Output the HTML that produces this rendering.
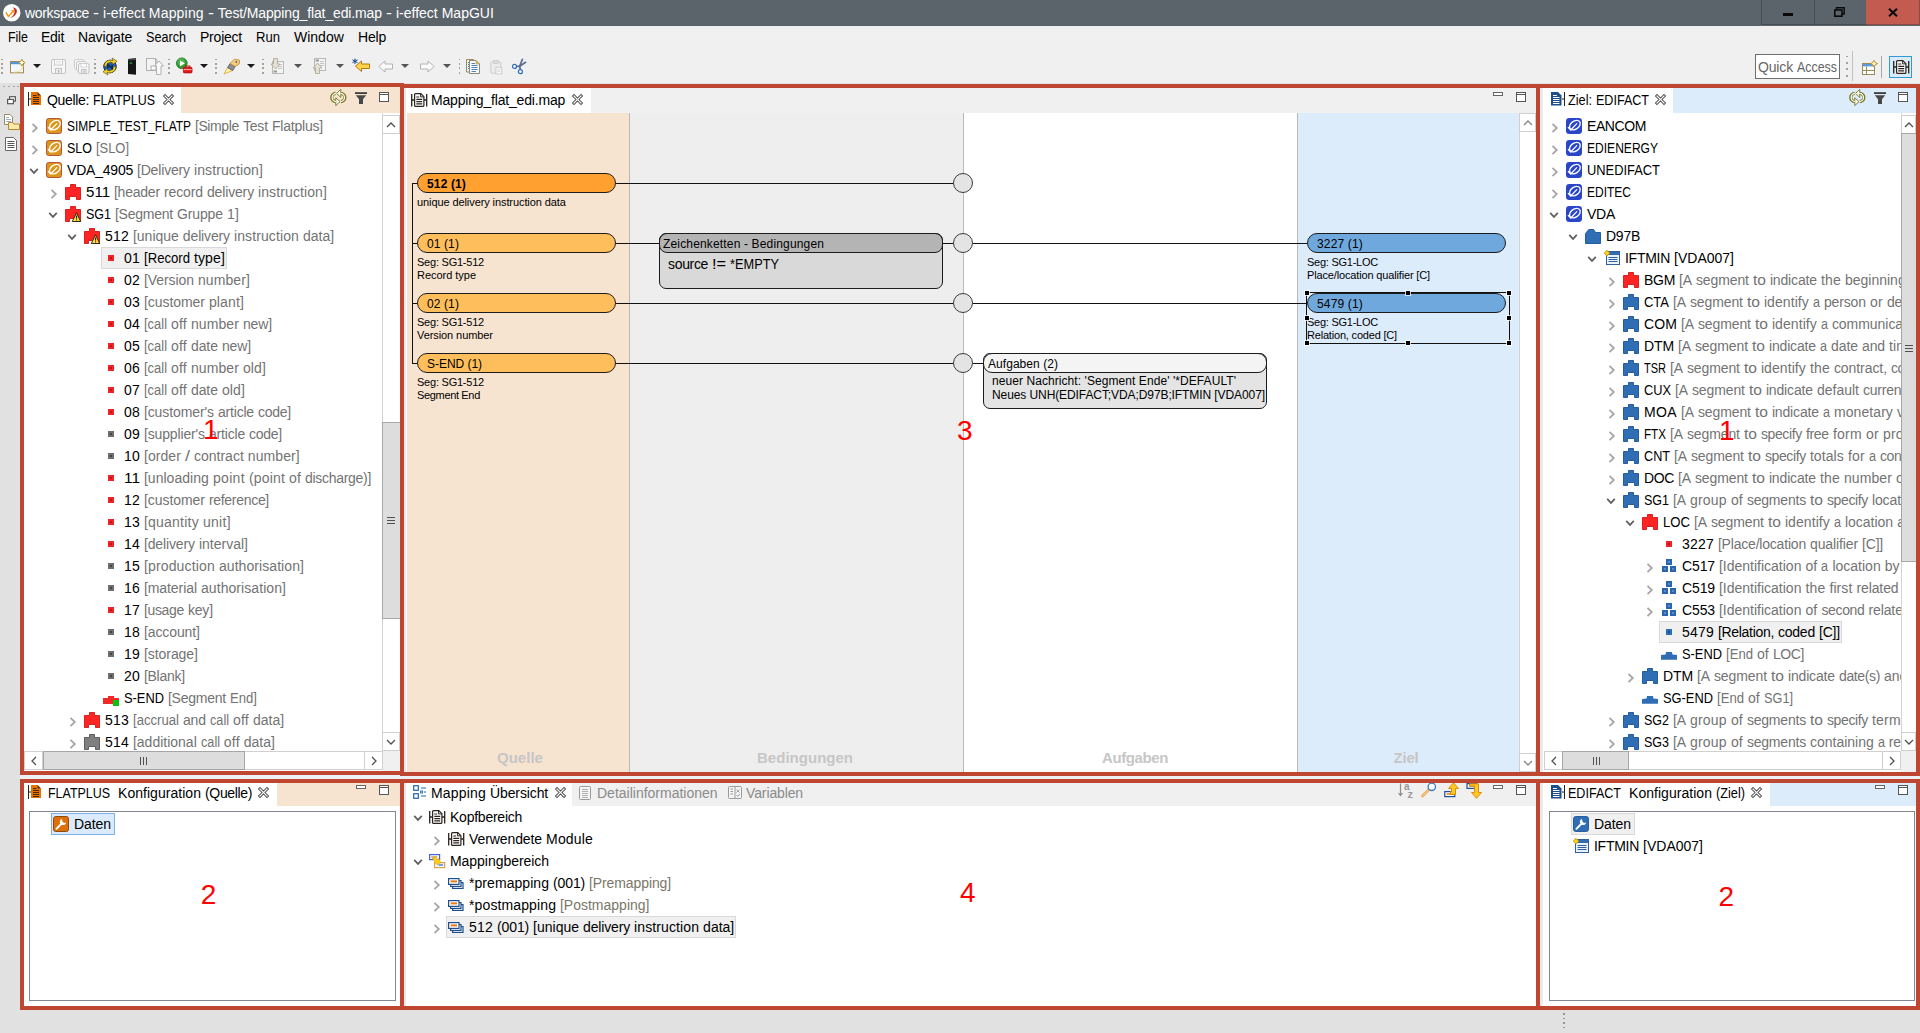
<!DOCTYPE html>
<html lang="de"><head><meta charset="utf-8"><title>i-effect MapGUI</title>
<style>
html,body{margin:0;padding:0}
body{width:1920px;height:1033px;position:relative;overflow:hidden;background:#e1e1e1;font-family:"Liberation Sans",sans-serif;font-size:14px}
div{position:absolute;box-sizing:border-box}
.t{white-space:pre}
.a{white-space:pre;font-family:"Liberation Sans",sans-serif}
svg{display:block;overflow:visible}
.sb{background:#fff;border:1px solid #c8c8c8}
</style></head><body>
<div style="left:0px;top:0px;width:1920px;height:26px;background:#5b646b;"></div>
<svg style="position:absolute;left:2.5px;top:4px" width="17.5" height="17.5" viewBox="0 0 20 20"><circle cx="10" cy="10" r="10" fill="#fff"/><path d="M11.2 3.6 C18.6 4.6 17.2 13.6 7.6 16.4 C13.4 13 14.8 8 11.2 3.6 Z" fill="#c4281c"/><path d="M3.6 10 L6.2 14.4 L11.6 8.4" fill="none" stroke="#f39a1e" stroke-width="1.7" stroke-linecap="round" stroke-linejoin="round"/><path d="M9 7.2 L12.8 6.6 L12.4 10.4 Z" fill="#f39a1e"/></svg>
<div class="t" style="left:25px;top:0px;height:26px;line-height:26px;font-size:14px;color:#fff;"><span style="letter-spacing:-0.32px">workspace</span><span style="letter-spacing:0.11px"> </span><span style="display:inline-block;width:6.00px;transform:scaleX(1.289);transform-origin:0 50%">-</span><span style="letter-spacing:0.11px"> </span>i-effect<span style="letter-spacing:0.11px"> </span><span style="letter-spacing:0.19px">Mapping</span><span style="letter-spacing:0.11px"> </span><span style="display:inline-block;width:6.00px;transform:scaleX(1.289);transform-origin:0 50%">-</span><span style="letter-spacing:0.11px"> </span><span style="letter-spacing:-0.13px">Test/Mapping_flat_edi.map</span><span style="letter-spacing:0.11px"> </span><span style="display:inline-block;width:6.00px;transform:scaleX(1.289);transform-origin:0 50%">-</span><span style="letter-spacing:0.11px"> </span>i-effect<span style="letter-spacing:0.11px"> </span>MapGUI</div>
<div style="left:1761px;top:0px;width:54px;height:25px;background:#5b646b;border:1px solid #454c52;border-top:none"></div>
<div style="left:1814px;top:0px;width:53px;height:25px;background:#5b646b;border:1px solid #454c52;border-top:none"></div>
<div style="left:1866px;top:0px;width:54px;height:25px;background:#c45b50;border:1px solid #8f4a44;border-top:none;border-left:none"></div>
<div style="left:1783px;top:13px;width:10px;height:3.4px;background:#0a0a0a;"></div>
<svg style="position:absolute;left:1834px;top:7px" width="11" height="10" viewBox="0 0 11 10"><path d="M2.5 2.5 V0.8 H10.2 V7 H8" fill="none" stroke="#0a0a0a" stroke-width="1.4"/><rect x="0.8" y="3" width="7.2" height="6.2" fill="none" stroke="#0a0a0a" stroke-width="1.6"/></svg>
<svg style="position:absolute;left:1888px;top:7.8px" width="9.4" height="8.6" viewBox="0 0 9.4 8.6"><path d="M1 0.8 L9 8.2 M9 0.8 L1 8.2" stroke="#0a0a0a" stroke-width="2.1"/></svg>
<div style="left:0px;top:26px;width:1920px;height:57px;background:#f0f0f0;"></div>
<div class="t" style="left:7.5px;top:26px;height:22px;line-height:22px;font-size:14px;color:#000;"><span style="display:inline-block;width:20.00px;transform:scaleX(0.887);transform-origin:0 50%">File</span></div>
<div class="t" style="left:41px;top:26px;height:22px;line-height:22px;font-size:14px;color:#000;"><span style="letter-spacing:-0.28px">Edit</span></div>
<div class="t" style="left:78px;top:26px;height:22px;line-height:22px;font-size:14px;color:#000;"><span style="letter-spacing:-0.15px">Navigate</span></div>
<div class="t" style="left:146px;top:26px;height:22px;line-height:22px;font-size:14px;color:#000;"><span style="display:inline-block;width:40.00px;transform:scaleX(0.902);transform-origin:0 50%">Search</span></div>
<div class="t" style="left:200px;top:26px;height:22px;line-height:22px;font-size:14px;color:#000;"><span style="letter-spacing:-0.22px">Project</span></div>
<div class="t" style="left:256px;top:26px;height:22px;line-height:22px;font-size:14px;color:#000;"><span style="display:inline-block;width:24.00px;transform:scaleX(0.935);transform-origin:0 50%">Run</span></div>
<div class="t" style="left:294px;top:26px;height:22px;line-height:22px;font-size:14px;color:#000;">Window</div>
<div class="t" style="left:358px;top:26px;height:22px;line-height:22px;font-size:14px;color:#000;"><span style="letter-spacing:-0.20px">Help</span></div>
<div style="left:1.4px;top:58.5px;width:1.7px;height:1.9px;background:#a8a090"></div><div style="left:1.4px;top:62.9px;width:1.7px;height:1.9px;background:#a8a090"></div><div style="left:1.4px;top:67.3px;width:1.7px;height:1.9px;background:#a8a090"></div><div style="left:1.4px;top:71.7px;width:1.7px;height:1.9px;background:#a8a090"></div><svg style="position:absolute;left:10px;top:57.5px" width="17" height="17" viewBox="0 0 17 17"><rect x="0.5" y="3.5" width="13" height="11.3" fill="#f2f8ff" stroke="#a88a48"/><rect x="1" y="4" width="12" height="2.2" fill="#4a96e0"/><path d="M4 14 C9 14 12.5 11.5 13 7.5" fill="none" stroke="#f6e2a8" stroke-width="1.2"/><path d="M11.8 1.2 L13 3.4 L15.2 4.6 L13 5.8 L11.8 8 L10.6 5.8 L8.4 4.6 L10.6 3.4 Z" fill="#fffbe0" stroke="#b08a2a" stroke-width="0.9"/></svg><svg style="position:absolute;left:33px;top:64px" width="8" height="4" viewBox="0 0 8 4"><path d="M0 0 H8 L4 4 Z" fill="#1a1a1a"/></svg><svg style="position:absolute;left:51px;top:59px" width="15" height="15" viewBox="0 0 15 15"><rect x="0.5" y="0.5" width="14" height="14" rx="1.5" fill="#f6f6f6" stroke="#c2c2c2"/><rect x="3.5" y="0.5" width="8" height="5.5" fill="#fcfcfc" stroke="#cacaca"/><path d="M5 2.5 H10 M5 4 H10" stroke="#dcdcdc" stroke-width="0.7"/><rect x="4.5" y="9.5" width="6" height="5" fill="#ececec" stroke="#c2c2c2"/><rect x="7" y="11" width="1.4" height="2.6" fill="#b8b8b8"/></svg><svg style="position:absolute;left:74px;top:59px" width="16" height="15" viewBox="0 0 16 15"><rect x="0.5" y="0.5" width="9.5" height="9.5" rx="1.5" fill="#f6f6f6" stroke="#cccccc"/><rect x="2.5" y="2.5" width="9.5" height="9.5" rx="1.5" fill="#f6f6f6" stroke="#c8c8c8"/><rect x="4.5" y="4.5" width="10.5" height="10" rx="1.5" fill="#f6f6f6" stroke="#c2c2c2"/><rect x="7" y="4.5" width="5.5" height="3.6" fill="#fcfcfc" stroke="#cfcfcf" stroke-width="0.8"/><rect x="7.5" y="10.5" width="4.5" height="4" fill="#ececec" stroke="#c2c2c2"/><rect x="9.3" y="11.6" width="1.2" height="2.2" fill="#b8b8b8"/></svg><div style="left:94.4px;top:58.5px;width:1.7px;height:1.9px;background:#a8a090"></div><div style="left:94.4px;top:62.9px;width:1.7px;height:1.9px;background:#a8a090"></div><div style="left:94.4px;top:67.3px;width:1.7px;height:1.9px;background:#a8a090"></div><div style="left:94.4px;top:71.7px;width:1.7px;height:1.9px;background:#a8a090"></div><svg style="position:absolute;left:101px;top:57px" width="18" height="18" viewBox="0 0 18 18"><circle cx="9" cy="9.5" r="6.3" fill="#1f5fb4" stroke="#1d2c3c" stroke-width="1"/><path d="M3 9 A6.5 6.5 0 0 1 12 3.6 L11 1 L16 4.2 L11.5 7.5 L11.4 5.4 A4.5 4.5 0 0 0 5.4 9.5 Z" fill="#f8d820" stroke="#6a5a10" stroke-width="0.7"/><path d="M15 10 A6.5 6.5 0 0 1 6 15.4 L7 18 L2 14.8 L6.5 11.5 L6.6 13.6 A4.5 4.5 0 0 0 12.6 9.5 Z" fill="#f8d820" stroke="#6a5a10" stroke-width="0.7"/><path d="M6.8 11.5 V7.5 L11.2 11.5 V7.5" fill="none" stroke="#0c2c5c" stroke-width="1.5"/></svg><svg style="position:absolute;left:127px;top:58px" width="10" height="17" viewBox="0 0 10 17"><path d="M1 1 L9 0.3 V16.7 L1 16 Z" fill="#151515"/><path d="M1 1 L9 0.3 L9 2 L1 2.6 Z" fill="#444"/><rect x="2.6" y="4.6" width="2.6" height="1" fill="#35d035"/></svg><svg style="position:absolute;left:146px;top:58px" width="18" height="17" viewBox="0 0 18 17"><path d="M0.5 0.5 H9.5 L11 2 V5 M11 11 V12.5 H0.5 Z" fill="#f4f4f4" stroke="#b0b0b0"/><path d="M0.5 0.5 H9.5 V12.5 H0.5 Z" fill="#f4f4f4" stroke="#b0b0b0"/><rect x="5" y="8" width="5" height="4" fill="#fff" stroke="#b0b0b0"/><path d="M13 3 L17.5 8 H15 V16.5 H10.5 V8 H8.5 Z" fill="#fafafa" stroke="#b0b0b0"/></svg><div style="left:168.3px;top:58.5px;width:1.7px;height:1.9px;background:#a8a090"></div><div style="left:168.3px;top:62.9px;width:1.7px;height:1.9px;background:#a8a090"></div><div style="left:168.3px;top:67.3px;width:1.7px;height:1.9px;background:#a8a090"></div><div style="left:168.3px;top:71.7px;width:1.7px;height:1.9px;background:#a8a090"></div><svg style="position:absolute;left:176px;top:57px" width="20" height="20" viewBox="0 0 20 20"><circle cx="5.8" cy="6.3" r="5.4" fill="#2e9a2e" stroke="#237a23" stroke-width="0.8"/><circle cx="5.2" cy="5.2" r="3.6" fill="#6cc86c" opacity="0.55"/><path d="M4 3.4 L9 6.3 L4 9.2 Z" fill="#fff"/><rect x="7.4" y="10.3" width="8.6" height="5.6" rx="0.8" fill="#e01818" stroke="#b01010" stroke-width="0.8"/><path d="M9.6 10.3 V9 H13.8 V10.3" fill="none" stroke="#c01010" stroke-width="1.1"/><path d="M7.6 12.6 H15.8" stroke="#ffd0d0" stroke-width="0.8"/></svg><svg style="position:absolute;left:200px;top:64px" width="8" height="4" viewBox="0 0 8 4"><path d="M0 0 H8 L4 4 Z" fill="#1a1a1a"/></svg><div style="left:215.4px;top:58.5px;width:1.7px;height:1.9px;background:#a8a090"></div><div style="left:215.4px;top:62.9px;width:1.7px;height:1.9px;background:#a8a090"></div><div style="left:215.4px;top:67.3px;width:1.7px;height:1.9px;background:#a8a090"></div><div style="left:215.4px;top:71.7px;width:1.7px;height:1.9px;background:#a8a090"></div><svg style="position:absolute;left:223px;top:58px" width="18" height="17" viewBox="0 0 18 17"><path d="M1 16 L4.5 9.5 L9.8 12.5 Z" fill="#fff2b8" stroke="#d6a81e" stroke-width="0.8"/><path d="M4.5 9.5 L7 5.5 L12.2 8.5 L9.8 12.5 Z" fill="#8c8c94" stroke="#5a5a62" stroke-width="0.8"/><path d="M7 5.5 L11.5 1.2 L16.5 2.2 L16.2 6 L12.2 8.5 Z" fill="#f6cf7c" stroke="#b9842a" stroke-width="0.8"/><circle cx="13.3" cy="3.9" r="0.9" fill="#3a5a9a"/></svg><svg style="position:absolute;left:247px;top:64px" width="8" height="4" viewBox="0 0 8 4"><path d="M0 0 H8 L4 4 Z" fill="#1a1a1a"/></svg><div style="left:262.4px;top:58.5px;width:1.7px;height:1.9px;background:#a8a090"></div><div style="left:262.4px;top:62.9px;width:1.7px;height:1.9px;background:#a8a090"></div><div style="left:262.4px;top:67.3px;width:1.7px;height:1.9px;background:#a8a090"></div><div style="left:262.4px;top:71.7px;width:1.7px;height:1.9px;background:#a8a090"></div><svg style="position:absolute;left:270px;top:58px" width="15" height="16" viewBox="0 0 15 16"><rect x="2.5" y="3.5" width="11" height="12" fill="#f4f4f4" stroke="#b8b8b8"/><path d="M8 6.5 H12 M8 8.5 H12 M8 10.5 H12" stroke="#c4c4c4"/><rect x="3.5" y="12.5" width="3.5" height="2" fill="#9a9a9a"/><path d="M3.5 0.5 H7.5 V6 H10 L5.5 11 L1 6 H3.5 Z" fill="#e4e0d4" stroke="#a8a494" stroke-width="0.8"/></svg><svg style="position:absolute;left:294px;top:64px" width="8" height="4" viewBox="0 0 8 4"><path d="M0 0 H8 L4 4 Z" fill="#555"/></svg><svg style="position:absolute;left:312px;top:58px" width="15" height="16" viewBox="0 0 15 16"><rect x="2.5" y="0.5" width="11" height="12" fill="#f4f4f4" stroke="#b8b8b8"/><path d="M8 3.5 H12 M8 5.5 H12 M8 7.5 H12" stroke="#c4c4c4"/><rect x="3.5" y="1.5" width="3.5" height="2" fill="#9a9a9a"/><path d="M3.5 15.5 H7.5 V10 H10 L5.5 5 L1 10 H3.5 Z" fill="#e4e0d4" stroke="#a8a494" stroke-width="0.8"/></svg><svg style="position:absolute;left:336px;top:64px" width="8" height="4" viewBox="0 0 8 4"><path d="M0 0 H8 L4 4 Z" fill="#555"/></svg><svg style="position:absolute;left:352px;top:58px" width="18" height="15" viewBox="0 0 18 15"><path d="M17.5 6 V10.5 H9.5 V13.5 L3.5 8.2 L9.5 3 V6 Z" fill="#ffd44a" stroke="#b47a12" stroke-width="1"/><path d="M3 0.5 V6 M0.4 1.8 L5.6 4.7 M5.6 1.8 L0.4 4.7" stroke="#17458f" stroke-width="1"/></svg><svg style="position:absolute;left:378px;top:60px" width="15" height="13" viewBox="0 0 15 13"><path d="M14.5 4 V9 H7 V12 L0.8 6.5 L7 1 V4 Z" fill="#fafafa" stroke="#b4b4b4" stroke-width="1"/></svg><svg style="position:absolute;left:401px;top:64px" width="8" height="4" viewBox="0 0 8 4"><path d="M0 0 H8 L4 4 Z" fill="#555"/></svg><svg style="position:absolute;left:420px;top:60px" width="15" height="13" viewBox="0 0 15 13"><path d="M0.5 4 V9 H8 V12 L14.2 6.5 L8 1 V4 Z" fill="#fafafa" stroke="#b4b4b4" stroke-width="1"/></svg><svg style="position:absolute;left:443px;top:64px" width="8" height="4" viewBox="0 0 8 4"><path d="M0 0 H8 L4 4 Z" fill="#555"/></svg><div style="left:458.6px;top:58.5px;width:1.7px;height:1.9px;background:#a8a090"></div><div style="left:458.6px;top:62.9px;width:1.7px;height:1.9px;background:#a8a090"></div><div style="left:458.6px;top:67.3px;width:1.7px;height:1.9px;background:#a8a090"></div><div style="left:458.6px;top:71.7px;width:1.7px;height:1.9px;background:#a8a090"></div><svg style="position:absolute;left:466px;top:59px" width="15" height="15" viewBox="0 0 15 15"><path d="M0.5 0.5 H7.5 V13 H0.5 Z" fill="#e8f4fc" stroke="#a08a58"/><path d="M2 3.5 H5 M2 5.5 H5 M2 7.5 H5 M2 9.5 H5" stroke="#4a7ac0" stroke-width="1"/><path d="M3.5 1.5 H10 L13.5 5 V14.5 H3.5 Z" fill="#f4fcff" stroke="#8a8a78"/><path d="M10 1.5 V5 H13.5 Z" fill="#e8c060" stroke="#b09048" stroke-width="0.6"/><path d="M5.5 4.5 H9 M5.5 6.5 H11.5 M5.5 8.5 H11.5 M5.5 10.5 H11.5 M5.5 12.5 H10" stroke="#5a80b8" stroke-width="1"/></svg><svg style="position:absolute;left:490px;top:59.5px" width="12.6" height="14.4" viewBox="0 0 14 17"><rect x="0.5" y="2.5" width="12" height="13" rx="0.8" fill="#ececec" stroke="#c6c6c6"/><rect x="3.5" y="0.5" width="6" height="3.5" rx="0.8" fill="#e2e2e2" stroke="#c2c2c2"/><rect x="6.5" y="8.5" width="7" height="8" fill="#f8f8f8" stroke="#c6c6c6"/><path d="M8 11.5 H12 M8 13.5 H12" stroke="#d6d6d6"/></svg><svg style="position:absolute;left:512px;top:58px" width="15" height="17" viewBox="0 0 15 17"><path d="M4.4 8.3 L7.6 8.2 L13.6 4.3" fill="none" stroke="#5a6c8e" stroke-width="1.7" stroke-linecap="round" stroke-linejoin="round"/><path d="M8.3 11.5 L7.6 8.2 L10.4 1.4" fill="none" stroke="#5a6c8e" stroke-width="1.7" stroke-linecap="round" stroke-linejoin="round"/><circle cx="2.5" cy="8.4" r="2" fill="#f4f8fc" stroke="#2c6cb8" stroke-width="1.2"/><circle cx="8.4" cy="13.7" r="2" fill="#f4f8fc" stroke="#2c6cb8" stroke-width="1.2"/></svg><div style="left:1846px;top:55.5px;width:1.7px;height:1.9px;background:#a8a090"></div><div style="left:1846px;top:61.9px;width:1.7px;height:1.9px;background:#a8a090"></div><div style="left:1846px;top:68.3px;width:1.7px;height:1.9px;background:#a8a090"></div><div style="left:1846px;top:74.7px;width:1.7px;height:1.9px;background:#a8a090"></div><div style="left:1852px;top:51px;width:1px;height:30px;background:#c0c0c0"></div><svg style="position:absolute;left:1861.5px;top:59.5px" width="16" height="16" viewBox="0 0 16 16"><rect x="0.5" y="3.5" width="12" height="11" fill="#fff" stroke="#9a8a5a"/><rect x="1" y="4" width="11" height="2.4" fill="#5a9ae0"/><path d="M4.5 6.5 V14.5 M0.5 10.5 H12.5" stroke="#9a8a5a"/><path d="M12 0.3 L13.2 2.4 L15.6 3.6 L13.2 4.8 L12 7 L10.8 4.8 L8.4 3.6 L10.8 2.4 Z" fill="#fff3b0" stroke="#b08a2a" stroke-width="0.9"/></svg><div style="left:1881px;top:56px;width:1px;height:22px;background:#a8a8a8"></div><div style="left:1889px;top:56px;width:23px;height:22px;background:#dcebfa;border:1px solid #2f9ad8"></div><svg style="position:absolute;left:1892.5px;top:60px" width="17" height="14" viewBox="0 0 17 14"><path d="M0.7 1 V13.5 M15.7 1 V13.5 M0.7 7 H3.6 M12.8 7 H15.7" stroke="#2a2420" stroke-width="1.3" fill="none"/><path d="M4.6 0.6 H9.8 L12.9 3.7 V12.4 Q12.9 13.4 11.9 13.4 H4.6 Q3.6 13.4 3.6 12.4 V1.6 Q3.6 0.6 4.6 0.6 Z" fill="#fff" stroke="#2a2420" stroke-width="1.2"/><path d="M9.6 0.8 V3.9 H12.7" fill="none" stroke="#2a2420" stroke-width="1"/><path d="M5.3 4 H8.2 M5.3 6.3 H11.2 M5.3 8.6 H11.2 M5.3 10.9 H11.2" stroke="#2a2420" stroke-width="1.2"/></svg>
<div style="left:1755px;top:54px;width:85px;height:25px;background:#fff;border:1px solid #6e6e6e"></div>
<div class="t" style="left:1758px;top:55.5px;height:22px;line-height:22px;font-size:14px;color:#666666;"><span style="letter-spacing:-0.16px">Quick</span><span style="letter-spacing:0.11px"> </span><span style="display:inline-block;width:40.00px;transform:scaleX(0.886);transform-origin:0 50%">Access</span></div>
<div style="left:0px;top:83px;width:20px;height:950px;background:#e1e1e1;"></div>
<div style="left:3.3px;top:86px;width:2px;height:1.2px;background:#a9a9a0;"></div>
<div style="left:8px;top:86px;width:2px;height:1.2px;background:#a9a9a0;"></div>
<div style="left:12.7px;top:86px;width:2px;height:1.2px;background:#a9a9a0;"></div>
<div style="left:17.4px;top:86px;width:2px;height:1.2px;background:#a9a9a0;"></div>
<svg style="position:absolute;left:7px;top:96px" width="9" height="8.4" viewBox="0 0 9 8.4"><rect x="2.6" y="0.7" width="5.8" height="4.4" fill="#fff" stroke="#5a5a5a" stroke-width="1.2"/><rect x="0.6" y="3.4" width="5.8" height="4.3" fill="#fff" stroke="#5a5a5a" stroke-width="1.2"/></svg>
<svg style="position:absolute;left:3px;top:113.6px" width="17" height="16" viewBox="0 0 17 16"><path d="M1.5 0.5 H7 L9.5 3 V10.5 H1.5 Z" fill="#fff" stroke="#9a8a60"/><path d="M3 3.5 H6 M3 5.5 H8 M3 7.5 H8" stroke="#7aa0cc" stroke-width="0.8"/><path d="M5.5 8.5 H10 L11 10 H16.5 V15.5 H5.5 Z" fill="#ffe9a8" stroke="#b08a3a"/></svg>
<svg style="position:absolute;left:5px;top:136.6px" width="12" height="14" viewBox="0 0 12 14"><path d="M0.5 0.5 H8.5 L11.5 3.5 V13.5 H0.5 Z" fill="#fff" stroke="#666"/><path d="M2.5 4.5 H9.5 M2.5 6.5 H9.5 M2.5 8.5 H9.5 M2.5 10.5 H9.5" stroke="#555" stroke-width="1"/></svg>
<div style="left:24px;top:87px;width:376px;height:26px;background:#f6e4d1;"></div>
<div style="left:24px;top:113px;width:376px;height:658px;background:#fff;"></div>
<div style="left:404px;top:88px;width:1132px;height:25px;background:#f0f0f0;"></div>
<div style="left:404px;top:113px;width:1132px;height:659px;background:#fff;"></div>
<div style="left:1540px;top:88px;width:376px;height:25px;background:#ddecfb;"></div>
<div style="left:1540px;top:113px;width:376px;height:659px;background:#fff;"></div>
<div style="left:24px;top:783px;width:376px;height:23px;background:#f6e4d1;"></div>
<div style="left:24px;top:806px;width:376px;height:200px;background:#fff;"></div>
<div style="left:404px;top:783px;width:1132px;height:23px;background:#f0f0f0;"></div>
<div style="left:404px;top:806px;width:1132px;height:200px;background:#fff;"></div>
<div style="left:1540px;top:783px;width:376px;height:23px;background:#ddecfb;"></div>
<div style="left:1540px;top:806px;width:376px;height:200px;background:#fff;"></div>
<div style="left:20px;top:775px;width:1900px;height:4px;background:#eef1f4;"></div>
<div style="left:24px;top:113px;width:359px;height:638px;overflow:hidden">
<div style="left:-24px;top:-113px;width:1920px;height:1033px">
<svg style="position:absolute;left:31px;top:122px" width="8" height="12" viewBox="0 0 8 12"><path d="M1.5 1.9 L5.8 6 L1.5 10.1" fill="none" stroke="#a6a6a6" stroke-width="1.8"/></svg>
<svg style="position:absolute;left:46px;top:118px" width="16" height="16" viewBox="0 0 16 16"><rect x="0.5" y="0.5" width="15" height="15" rx="2.2" fill="#dc961a" stroke="#b5533c"/><ellipse cx="8.9" cy="7.1" rx="5.9" ry="4" transform="rotate(-36 8.9 7.1)" fill="none" stroke="#fff" stroke-width="1.35"/><path d="M2.3 9.5 L4.7 12 L10.8 5.6" fill="none" stroke="#fff" stroke-width="1.2" stroke-linecap="round" stroke-linejoin="round"/></svg>
<div class="t" style="left:67px;top:115px;height:22px;line-height:22px;font-size:14px;color:#000;"><span style="display:inline-block;width:124.00px;transform:scaleX(0.854);transform-origin:0 50%">SIMPLE_TEST_FLATP</span><span style="color:#737373"> <span style="letter-spacing:-0.38px">[Simple</span><span style="letter-spacing:0.11px"> </span><span style="letter-spacing:-0.17px">Test</span><span style="letter-spacing:0.11px"> </span><span style="letter-spacing:-0.21px">Flatplus]</span></span></div>
<svg style="position:absolute;left:31px;top:144px" width="8" height="12" viewBox="0 0 8 12"><path d="M1.5 1.9 L5.8 6 L1.5 10.1" fill="none" stroke="#a6a6a6" stroke-width="1.8"/></svg>
<svg style="position:absolute;left:46px;top:140px" width="16" height="16" viewBox="0 0 16 16"><rect x="0.5" y="0.5" width="15" height="15" rx="2.2" fill="#dc961a" stroke="#b5533c"/><ellipse cx="8.9" cy="7.1" rx="5.9" ry="4" transform="rotate(-36 8.9 7.1)" fill="none" stroke="#fff" stroke-width="1.35"/><path d="M2.3 9.5 L4.7 12 L10.8 5.6" fill="none" stroke="#fff" stroke-width="1.2" stroke-linecap="round" stroke-linejoin="round"/></svg>
<div class="t" style="left:67px;top:137px;height:22px;line-height:22px;font-size:14px;color:#000;"><span style="display:inline-block;width:25.00px;transform:scaleX(0.892);transform-origin:0 50%">SLO</span><span style="color:#737373"> <span style="display:inline-block;width:33.00px;transform:scaleX(0.922);transform-origin:0 50%">[SLO]</span></span></div>
<svg style="position:absolute;left:28px;top:166.6px" width="12" height="8" viewBox="0 0 12 8"><path d="M2.2 1.8 L6 5.9 L9.8 1.8" fill="none" stroke="#606060" stroke-width="1.7"/></svg>
<svg style="position:absolute;left:46px;top:162px" width="16" height="16" viewBox="0 0 16 16"><rect x="0.5" y="0.5" width="15" height="15" rx="2.2" fill="#dc961a" stroke="#b5533c"/><ellipse cx="8.9" cy="7.1" rx="5.9" ry="4" transform="rotate(-36 8.9 7.1)" fill="none" stroke="#fff" stroke-width="1.35"/><path d="M2.3 9.5 L4.7 12 L10.8 5.6" fill="none" stroke="#fff" stroke-width="1.2" stroke-linecap="round" stroke-linejoin="round"/></svg>
<div class="t" style="left:67px;top:159px;height:22px;line-height:22px;font-size:14px;color:#000;"><span style="letter-spacing:-0.21px">VDA_4905</span><span style="color:#737373"> <span style="letter-spacing:-0.16px">[Delivery</span><span style="letter-spacing:0.11px"> </span><span style="letter-spacing:0.11px">instruction]</span></span></div>
<svg style="position:absolute;left:50px;top:188px" width="8" height="12" viewBox="0 0 8 12"><path d="M1.5 1.9 L5.8 6 L1.5 10.1" fill="none" stroke="#a6a6a6" stroke-width="1.8"/></svg>
<svg style="position:absolute;left:65px;top:184px" width="16" height="16" viewBox="0 0 16 16"><path d="M5.5 0.5 H10.5 V3.5 H15.5 V15.5 H11.5 V12.5 H4.5 V15.5 H0.5 V3.5 H5.5 Z" fill="#ff2424" stroke="#d82222"/></svg>
<div class="t" style="left:86px;top:181px;height:22px;line-height:22px;font-size:14px;color:#000;"><span style="display:inline-block;width:24.00px;transform:scaleX(1.076);transform-origin:0 50%">511</span><span style="color:#737373"> <span style="letter-spacing:-0.21px">[header</span><span style="letter-spacing:0.11px"> </span><span style="letter-spacing:-0.11px">record</span><span style="letter-spacing:0.11px"> </span><span style="letter-spacing:-0.15px">delivery</span><span style="letter-spacing:0.11px"> </span><span style="letter-spacing:0.11px">instruction]</span></span></div>
<svg style="position:absolute;left:47px;top:210.6px" width="12" height="8" viewBox="0 0 12 8"><path d="M2.2 1.8 L6 5.9 L9.8 1.8" fill="none" stroke="#606060" stroke-width="1.7"/></svg>
<svg style="position:absolute;left:65px;top:206px" width="16" height="16" viewBox="0 0 16 16"><path d="M5.5 0.5 H10.5 V3.5 H15.5 V15.5 H11.5 V12.5 H4.5 V15.5 H0.5 V3.5 H5.5 Z" fill="#ff2424" stroke="#d82222"/><path d="M11.5 6.8 L15.7 15.5 H7.3 Z" fill="#ffe233" stroke="#1a1a1a" stroke-width="0.9" stroke-linejoin="round"/><rect x="11" y="9.6" width="1.1" height="3" fill="#1a1a1a"/><rect x="11" y="13.3" width="1.1" height="1.1" fill="#1a1a1a"/></svg>
<div class="t" style="left:86px;top:203px;height:22px;line-height:22px;font-size:14px;color:#000;"><span style="display:inline-block;width:25.00px;transform:scaleX(0.892);transform-origin:0 50%">SG1</span><span style="color:#737373"> <span style="letter-spacing:-0.24px">[Segment</span><span style="letter-spacing:0.11px"> </span><span style="letter-spacing:-0.11px">Gruppe</span><span style="letter-spacing:0.11px"> </span><span style="letter-spacing:0.16px">1]</span></span></div>
<svg style="position:absolute;left:66px;top:232.6px" width="12" height="8" viewBox="0 0 12 8"><path d="M2.2 1.8 L6 5.9 L9.8 1.8" fill="none" stroke="#606060" stroke-width="1.7"/></svg>
<svg style="position:absolute;left:84px;top:228px" width="16" height="16" viewBox="0 0 16 16"><path d="M5.5 0.5 H10.5 V3.5 H15.5 V15.5 H11.5 V12.5 H4.5 V15.5 H0.5 V3.5 H5.5 Z" fill="#ff2424" stroke="#d82222"/><path d="M11.5 6.8 L15.7 15.5 H7.3 Z" fill="#ffe233" stroke="#1a1a1a" stroke-width="0.9" stroke-linejoin="round"/><rect x="11" y="9.6" width="1.1" height="3" fill="#1a1a1a"/><rect x="11" y="13.3" width="1.1" height="1.1" fill="#1a1a1a"/></svg>
<div class="t" style="left:105px;top:225px;height:22px;line-height:22px;font-size:14px;color:#000;"><span style="letter-spacing:0.22px">512</span><span style="color:#737373"> [unique<span style="letter-spacing:0.11px"> </span><span style="letter-spacing:-0.15px">delivery</span><span style="letter-spacing:0.11px"> </span><span style="letter-spacing:0.11px">instruction</span><span style="letter-spacing:0.11px"> </span>data]</span></div>
<div style="left:101px;top:247px;width:126px;height:22px;background:#f0f0f0;border:1px solid #d9d9d9"></div>
<svg style="position:absolute;left:103px;top:250px" width="16" height="16" viewBox="0 0 16 16"><rect x="5" y="5" width="6" height="6" fill="#f02424"/><rect x="7" y="7" width="2" height="2" fill="#c01414"/></svg>
<div class="t" style="left:124px;top:247px;height:22px;line-height:22px;font-size:14px;color:#000;"><span style="letter-spacing:0.22px">01</span><span style="color:#000"> <span style="display:inline-block;width:46.00px;transform:scaleX(0.939);transform-origin:0 50%">[Record</span><span style="letter-spacing:0.11px"> </span><span style="letter-spacing:0.13px">type]</span></span></div>
<svg style="position:absolute;left:103px;top:272px" width="16" height="16" viewBox="0 0 16 16"><rect x="5" y="5" width="6" height="6" fill="#f02424"/><rect x="7" y="7" width="2" height="2" fill="#c01414"/></svg>
<div class="t" style="left:124px;top:269px;height:22px;line-height:22px;font-size:14px;color:#000;"><span style="letter-spacing:0.22px">02</span><span style="color:#737373"> <span style="letter-spacing:-0.07px">[Version</span><span style="letter-spacing:0.11px"> </span><span style="letter-spacing:0.10px">number]</span></span></div>
<svg style="position:absolute;left:103px;top:294px" width="16" height="16" viewBox="0 0 16 16"><rect x="5" y="5" width="6" height="6" fill="#f02424"/><rect x="7" y="7" width="2" height="2" fill="#c01414"/></svg>
<div class="t" style="left:124px;top:291px;height:22px;line-height:22px;font-size:14px;color:#000;"><span style="letter-spacing:0.22px">03</span><span style="color:#737373"> <span style="letter-spacing:-0.05px">[customer</span><span style="letter-spacing:0.11px"> </span><span style="letter-spacing:0.13px">plant]</span></span></div>
<svg style="position:absolute;left:103px;top:316px" width="16" height="16" viewBox="0 0 16 16"><rect x="5" y="5" width="6" height="6" fill="#f02424"/><rect x="7" y="7" width="2" height="2" fill="#c01414"/></svg>
<div class="t" style="left:124px;top:313px;height:22px;line-height:22px;font-size:14px;color:#000;"><span style="letter-spacing:0.22px">04</span><span style="color:#737373"> <span style="display:inline-block;width:23.00px;transform:scaleX(0.924);transform-origin:0 50%">[call</span><span style="letter-spacing:0.11px"> </span><span style="letter-spacing:0.23px">off</span><span style="letter-spacing:0.11px"> </span><span style="letter-spacing:0.09px">number</span><span style="letter-spacing:0.11px"> </span><span style="letter-spacing:-0.14px">new]</span></span></div>
<svg style="position:absolute;left:103px;top:338px" width="16" height="16" viewBox="0 0 16 16"><rect x="5" y="5" width="6" height="6" fill="#f02424"/><rect x="7" y="7" width="2" height="2" fill="#c01414"/></svg>
<div class="t" style="left:124px;top:335px;height:22px;line-height:22px;font-size:14px;color:#000;"><span style="letter-spacing:0.22px">05</span><span style="color:#737373"> <span style="display:inline-block;width:23.00px;transform:scaleX(0.924);transform-origin:0 50%">[call</span><span style="letter-spacing:0.11px"> </span><span style="letter-spacing:0.23px">off</span><span style="letter-spacing:0.11px"> </span><span style="letter-spacing:-0.06px">date</span><span style="letter-spacing:0.11px"> </span><span style="letter-spacing:-0.14px">new]</span></span></div>
<svg style="position:absolute;left:103px;top:360px" width="16" height="16" viewBox="0 0 16 16"><rect x="5" y="5" width="6" height="6" fill="#f02424"/><rect x="7" y="7" width="2" height="2" fill="#c01414"/></svg>
<div class="t" style="left:124px;top:357px;height:22px;line-height:22px;font-size:14px;color:#000;"><span style="letter-spacing:0.22px">06</span><span style="color:#737373"> <span style="display:inline-block;width:23.00px;transform:scaleX(0.924);transform-origin:0 50%">[call</span><span style="letter-spacing:0.11px"> </span><span style="letter-spacing:0.23px">off</span><span style="letter-spacing:0.11px"> </span><span style="letter-spacing:0.09px">number</span><span style="letter-spacing:0.11px"> </span><span style="letter-spacing:0.11px">old]</span></span></div>
<svg style="position:absolute;left:103px;top:382px" width="16" height="16" viewBox="0 0 16 16"><rect x="5" y="5" width="6" height="6" fill="#f02424"/><rect x="7" y="7" width="2" height="2" fill="#c01414"/></svg>
<div class="t" style="left:124px;top:379px;height:22px;line-height:22px;font-size:14px;color:#000;"><span style="letter-spacing:0.22px">07</span><span style="color:#737373"> <span style="display:inline-block;width:23.00px;transform:scaleX(0.924);transform-origin:0 50%">[call</span><span style="letter-spacing:0.11px"> </span><span style="letter-spacing:0.23px">off</span><span style="letter-spacing:0.11px"> </span><span style="letter-spacing:-0.06px">date</span><span style="letter-spacing:0.11px"> </span><span style="letter-spacing:0.11px">old]</span></span></div>
<svg style="position:absolute;left:103px;top:404px" width="16" height="16" viewBox="0 0 16 16"><rect x="5" y="5" width="6" height="6" fill="#f02424"/><rect x="7" y="7" width="2" height="2" fill="#c01414"/></svg>
<div class="t" style="left:124px;top:401px;height:22px;line-height:22px;font-size:14px;color:#000;"><span style="letter-spacing:0.22px">08</span><span style="color:#737373"> <span style="letter-spacing:-0.10px">[customer's</span><span style="letter-spacing:0.11px"> </span><span style="letter-spacing:-0.19px">article</span><span style="letter-spacing:0.11px"> </span><span style="letter-spacing:-0.25px">code]</span></span></div>
<svg style="position:absolute;left:103px;top:426px" width="16" height="16" viewBox="0 0 16 16"><rect x="5" y="5" width="6" height="6" fill="#6e6e6e"/><rect x="7" y="7" width="2" height="2" fill="#444"/></svg>
<div class="t" style="left:124px;top:423px;height:22px;line-height:22px;font-size:14px;color:#000;"><span style="letter-spacing:0.22px">09</span><span style="color:#737373"> <span style="letter-spacing:-0.14px">[supplier's</span><span style="letter-spacing:0.11px"> </span><span style="letter-spacing:-0.19px">article</span><span style="letter-spacing:0.11px"> </span><span style="letter-spacing:-0.25px">code]</span></span></div>
<svg style="position:absolute;left:103px;top:448px" width="16" height="16" viewBox="0 0 16 16"><rect x="5" y="5" width="6" height="6" fill="#6e6e6e"/><rect x="7" y="7" width="2" height="2" fill="#444"/></svg>
<div class="t" style="left:124px;top:445px;height:22px;line-height:22px;font-size:14px;color:#000;"><span style="letter-spacing:0.22px">10</span><span style="color:#737373"> <span style="letter-spacing:0.08px">[order</span><span style="letter-spacing:0.11px"> </span><span style="display:inline-block;width:5.00px;transform:scaleX(1.285);transform-origin:0 50%">/</span><span style="letter-spacing:0.11px"> </span>contract<span style="letter-spacing:0.11px"> </span><span style="letter-spacing:0.10px">number]</span></span></div>
<svg style="position:absolute;left:103px;top:470px" width="16" height="16" viewBox="0 0 16 16"><rect x="5" y="5" width="6" height="6" fill="#f02424"/><rect x="7" y="7" width="2" height="2" fill="#c01414"/></svg>
<div class="t" style="left:124px;top:467px;height:22px;line-height:22px;font-size:14px;color:#000;"><span style="display:inline-block;width:16.00px;transform:scaleX(1.101);transform-origin:0 50%">11</span><span style="color:#737373"> <span style="letter-spacing:0.04px">[unloading</span><span style="letter-spacing:0.11px"> </span><span style="letter-spacing:0.33px">point</span><span style="letter-spacing:0.11px"> </span><span style="letter-spacing:0.17px">(point</span><span style="letter-spacing:0.11px"> </span><span style="letter-spacing:0.16px">of</span><span style="letter-spacing:0.11px"> </span><span style="letter-spacing:-0.29px">discharge)]</span></span></div>
<svg style="position:absolute;left:103px;top:492px" width="16" height="16" viewBox="0 0 16 16"><rect x="5" y="5" width="6" height="6" fill="#f02424"/><rect x="7" y="7" width="2" height="2" fill="#c01414"/></svg>
<div class="t" style="left:124px;top:489px;height:22px;line-height:22px;font-size:14px;color:#000;"><span style="letter-spacing:0.22px">12</span><span style="color:#737373"> <span style="letter-spacing:-0.05px">[customer</span><span style="letter-spacing:0.11px"> </span><span style="letter-spacing:-0.30px">reference]</span></span></div>
<svg style="position:absolute;left:103px;top:514px" width="16" height="16" viewBox="0 0 16 16"><rect x="5" y="5" width="6" height="6" fill="#f02424"/><rect x="7" y="7" width="2" height="2" fill="#c01414"/></svg>
<div class="t" style="left:124px;top:511px;height:22px;line-height:22px;font-size:14px;color:#000;"><span style="letter-spacing:0.22px">13</span><span style="color:#737373"> <span style="letter-spacing:0.23px">[quantity</span><span style="letter-spacing:0.11px"> </span><span style="letter-spacing:0.31px">unit]</span></span></div>
<svg style="position:absolute;left:103px;top:536px" width="16" height="16" viewBox="0 0 16 16"><rect x="5" y="5" width="6" height="6" fill="#f02424"/><rect x="7" y="7" width="2" height="2" fill="#c01414"/></svg>
<div class="t" style="left:124px;top:533px;height:22px;line-height:22px;font-size:14px;color:#000;"><span style="letter-spacing:0.22px">14</span><span style="color:#737373"> <span style="letter-spacing:-0.12px">[delivery</span><span style="letter-spacing:0.11px"> </span>interval]</span></div>
<svg style="position:absolute;left:103px;top:558px" width="16" height="16" viewBox="0 0 16 16"><rect x="5" y="5" width="6" height="6" fill="#6e6e6e"/><rect x="7" y="7" width="2" height="2" fill="#444"/></svg>
<div class="t" style="left:124px;top:555px;height:22px;line-height:22px;font-size:14px;color:#000;"><span style="letter-spacing:0.22px">15</span><span style="color:#737373"> <span style="letter-spacing:0.16px">[production</span><span style="letter-spacing:0.11px"> </span><span style="letter-spacing:0.07px">authorisation]</span></span></div>
<svg style="position:absolute;left:103px;top:580px" width="16" height="16" viewBox="0 0 16 16"><rect x="5" y="5" width="6" height="6" fill="#6e6e6e"/><rect x="7" y="7" width="2" height="2" fill="#444"/></svg>
<div class="t" style="left:124px;top:577px;height:22px;line-height:22px;font-size:14px;color:#000;"><span style="letter-spacing:0.22px">16</span><span style="color:#737373"> <span style="letter-spacing:-0.07px">[material</span><span style="letter-spacing:0.11px"> </span><span style="letter-spacing:0.07px">authorisation]</span></span></div>
<svg style="position:absolute;left:103px;top:602px" width="16" height="16" viewBox="0 0 16 16"><rect x="5" y="5" width="6" height="6" fill="#f02424"/><rect x="7" y="7" width="2" height="2" fill="#c01414"/></svg>
<div class="t" style="left:124px;top:599px;height:22px;line-height:22px;font-size:14px;color:#000;"><span style="letter-spacing:0.22px">17</span><span style="color:#737373"> <span style="letter-spacing:-0.34px">[usage</span><span style="letter-spacing:0.11px"> </span><span style="letter-spacing:-0.17px">key]</span></span></div>
<svg style="position:absolute;left:103px;top:624px" width="16" height="16" viewBox="0 0 16 16"><rect x="5" y="5" width="6" height="6" fill="#6e6e6e"/><rect x="7" y="7" width="2" height="2" fill="#444"/></svg>
<div class="t" style="left:124px;top:621px;height:22px;line-height:22px;font-size:14px;color:#000;"><span style="letter-spacing:0.22px">18</span><span style="color:#737373"> <span style="letter-spacing:-0.09px">[account]</span></span></div>
<svg style="position:absolute;left:103px;top:646px" width="16" height="16" viewBox="0 0 16 16"><rect x="5" y="5" width="6" height="6" fill="#6e6e6e"/><rect x="7" y="7" width="2" height="2" fill="#444"/></svg>
<div class="t" style="left:124px;top:643px;height:22px;line-height:22px;font-size:14px;color:#000;"><span style="letter-spacing:0.22px">19</span><span style="color:#737373"> <span style="letter-spacing:-0.05px">[storage]</span></span></div>
<svg style="position:absolute;left:103px;top:668px" width="16" height="16" viewBox="0 0 16 16"><rect x="5" y="5" width="6" height="6" fill="#6e6e6e"/><rect x="7" y="7" width="2" height="2" fill="#444"/></svg>
<div class="t" style="left:124px;top:665px;height:22px;line-height:22px;font-size:14px;color:#000;"><span style="letter-spacing:0.22px">20</span><span style="color:#737373"> <span style="letter-spacing:-0.26px">[Blank]</span></span></div>
<svg style="position:absolute;left:103px;top:690px" width="16" height="16" viewBox="0 0 16 16"><path d="M0 8 H5 V6 H11 V8 H16 V14 H0 Z" fill="#f52828"/><rect x="10" y="10" width="6" height="6" fill="#10c010"/></svg>
<div class="t" style="left:124px;top:687px;height:22px;line-height:22px;font-size:14px;color:#000;"><span style="display:inline-block;width:40.00px;transform:scaleX(0.918);transform-origin:0 50%">S-END</span><span style="color:#737373"> <span style="letter-spacing:-0.24px">[Segment</span><span style="letter-spacing:0.11px"> </span><span style="display:inline-block;width:27.00px;transform:scaleX(0.938);transform-origin:0 50%">End]</span></span></div>
<svg style="position:absolute;left:69px;top:716px" width="8" height="12" viewBox="0 0 8 12"><path d="M1.5 1.9 L5.8 6 L1.5 10.1" fill="none" stroke="#a6a6a6" stroke-width="1.8"/></svg>
<svg style="position:absolute;left:84px;top:712px" width="16" height="16" viewBox="0 0 16 16"><path d="M5.5 0.5 H10.5 V3.5 H15.5 V15.5 H11.5 V12.5 H4.5 V15.5 H0.5 V3.5 H5.5 Z" fill="#ff2424" stroke="#d82222"/></svg>
<div class="t" style="left:105px;top:709px;height:22px;line-height:22px;font-size:14px;color:#000;"><span style="letter-spacing:0.22px">513</span><span style="color:#737373"> <span style="display:inline-block;width:46.00px;transform:scaleX(0.939);transform-origin:0 50%">[accrual</span><span style="letter-spacing:0.11px"> </span><span style="letter-spacing:-0.11px">and</span><span style="letter-spacing:0.11px"> </span><span style="display:inline-block;width:19.00px;transform:scaleX(0.905);transform-origin:0 50%">call</span><span style="letter-spacing:0.11px"> </span><span style="letter-spacing:0.23px">off</span><span style="letter-spacing:0.11px"> </span>data]</span></div>
<svg style="position:absolute;left:69px;top:738px" width="8" height="12" viewBox="0 0 8 12"><path d="M1.5 1.9 L5.8 6 L1.5 10.1" fill="none" stroke="#a6a6a6" stroke-width="1.8"/></svg>
<svg style="position:absolute;left:84px;top:734px" width="16" height="16" viewBox="0 0 16 16"><path d="M5.5 0.5 H10.5 V3.5 H15.5 V15.5 H11.5 V12.5 H4.5 V15.5 H0.5 V3.5 H5.5 Z" fill="#808080" stroke="#5e5e5e"/></svg>
<div class="t" style="left:105px;top:731px;height:22px;line-height:22px;font-size:14px;color:#000;"><span style="letter-spacing:0.22px">514</span><span style="color:#737373"> [additional<span style="letter-spacing:0.11px"> </span><span style="display:inline-block;width:19.00px;transform:scaleX(0.905);transform-origin:0 50%">call</span><span style="letter-spacing:0.11px"> </span><span style="letter-spacing:0.23px">off</span><span style="letter-spacing:0.11px"> </span>data]</span></div>
</div></div>
<div style="left:1540px;top:113px;width:361px;height:638px;overflow:hidden">
<div style="left:-1540px;top:-113px;width:1920px;height:1033px">
<svg style="position:absolute;left:1551px;top:122px" width="8" height="12" viewBox="0 0 8 12"><path d="M1.5 1.9 L5.8 6 L1.5 10.1" fill="none" stroke="#a6a6a6" stroke-width="1.8"/></svg>
<svg style="position:absolute;left:1566px;top:118px" width="16" height="16" viewBox="0 0 16 16"><rect x="0.5" y="0.5" width="15" height="15" rx="2.2" fill="#2a46c8" stroke="#2a46c8"/><ellipse cx="8.9" cy="7.1" rx="5.9" ry="4" transform="rotate(-36 8.9 7.1)" fill="none" stroke="#fff" stroke-width="1.35"/><path d="M2.3 9.5 L4.7 12 L10.8 5.6" fill="none" stroke="#fff" stroke-width="1.2" stroke-linecap="round" stroke-linejoin="round"/></svg>
<div class="t" style="left:1587px;top:115px;height:22px;line-height:22px;font-size:14px;color:#000;"><span style="letter-spacing:-0.41px">EANCOM</span></div>
<svg style="position:absolute;left:1551px;top:144px" width="8" height="12" viewBox="0 0 8 12"><path d="M1.5 1.9 L5.8 6 L1.5 10.1" fill="none" stroke="#a6a6a6" stroke-width="1.8"/></svg>
<svg style="position:absolute;left:1566px;top:140px" width="16" height="16" viewBox="0 0 16 16"><rect x="0.5" y="0.5" width="15" height="15" rx="2.2" fill="#2a46c8" stroke="#2a46c8"/><ellipse cx="8.9" cy="7.1" rx="5.9" ry="4" transform="rotate(-36 8.9 7.1)" fill="none" stroke="#fff" stroke-width="1.35"/><path d="M2.3 9.5 L4.7 12 L10.8 5.6" fill="none" stroke="#fff" stroke-width="1.2" stroke-linecap="round" stroke-linejoin="round"/></svg>
<div class="t" style="left:1587px;top:137px;height:22px;line-height:22px;font-size:14px;color:#000;"><span style="display:inline-block;width:71.00px;transform:scaleX(0.861);transform-origin:0 50%">EDIENERGY</span></div>
<svg style="position:absolute;left:1551px;top:166px" width="8" height="12" viewBox="0 0 8 12"><path d="M1.5 1.9 L5.8 6 L1.5 10.1" fill="none" stroke="#a6a6a6" stroke-width="1.8"/></svg>
<svg style="position:absolute;left:1566px;top:162px" width="16" height="16" viewBox="0 0 16 16"><rect x="0.5" y="0.5" width="15" height="15" rx="2.2" fill="#2a46c8" stroke="#2a46c8"/><ellipse cx="8.9" cy="7.1" rx="5.9" ry="4" transform="rotate(-36 8.9 7.1)" fill="none" stroke="#fff" stroke-width="1.35"/><path d="M2.3 9.5 L4.7 12 L10.8 5.6" fill="none" stroke="#fff" stroke-width="1.2" stroke-linecap="round" stroke-linejoin="round"/></svg>
<div class="t" style="left:1587px;top:159px;height:22px;line-height:22px;font-size:14px;color:#000;"><span style="display:inline-block;width:73.00px;transform:scaleX(0.920);transform-origin:0 50%">UNEDIFACT</span></div>
<svg style="position:absolute;left:1551px;top:188px" width="8" height="12" viewBox="0 0 8 12"><path d="M1.5 1.9 L5.8 6 L1.5 10.1" fill="none" stroke="#a6a6a6" stroke-width="1.8"/></svg>
<svg style="position:absolute;left:1566px;top:184px" width="16" height="16" viewBox="0 0 16 16"><rect x="0.5" y="0.5" width="15" height="15" rx="2.2" fill="#2a46c8" stroke="#2a46c8"/><ellipse cx="8.9" cy="7.1" rx="5.9" ry="4" transform="rotate(-36 8.9 7.1)" fill="none" stroke="#fff" stroke-width="1.35"/><path d="M2.3 9.5 L4.7 12 L10.8 5.6" fill="none" stroke="#fff" stroke-width="1.2" stroke-linecap="round" stroke-linejoin="round"/></svg>
<div class="t" style="left:1587px;top:181px;height:22px;line-height:22px;font-size:14px;color:#000;"><span style="display:inline-block;width:44.00px;transform:scaleX(0.857);transform-origin:0 50%">EDITEC</span></div>
<svg style="position:absolute;left:1548px;top:210.6px" width="12" height="8" viewBox="0 0 12 8"><path d="M2.2 1.8 L6 5.9 L9.8 1.8" fill="none" stroke="#606060" stroke-width="1.7"/></svg>
<svg style="position:absolute;left:1566px;top:206px" width="16" height="16" viewBox="0 0 16 16"><rect x="0.5" y="0.5" width="15" height="15" rx="2.2" fill="#2a46c8" stroke="#2a46c8"/><ellipse cx="8.9" cy="7.1" rx="5.9" ry="4" transform="rotate(-36 8.9 7.1)" fill="none" stroke="#fff" stroke-width="1.35"/><path d="M2.3 9.5 L4.7 12 L10.8 5.6" fill="none" stroke="#fff" stroke-width="1.2" stroke-linecap="round" stroke-linejoin="round"/></svg>
<div class="t" style="left:1587px;top:203px;height:22px;line-height:22px;font-size:14px;color:#000;"><span style="letter-spacing:-0.27px">VDA</span></div>
<svg style="position:absolute;left:1567px;top:232.6px" width="12" height="8" viewBox="0 0 12 8"><path d="M2.2 1.8 L6 5.9 L9.8 1.8" fill="none" stroke="#606060" stroke-width="1.7"/></svg>
<svg style="position:absolute;left:1585px;top:228px" width="16" height="16" viewBox="0 0 16 16"><path d="M0.5 15.5 V5.5 L3.8 1.5 H8.6 L10.6 4.5 H15.5 V15.5 Z" fill="#2f6db5" stroke="#255c9c"/></svg>
<div class="t" style="left:1606px;top:225px;height:22px;line-height:22px;font-size:14px;color:#000;"><span style="letter-spacing:-0.25px">D97B</span></div>
<svg style="position:absolute;left:1586px;top:254.6px" width="12" height="8" viewBox="0 0 12 8"><path d="M2.2 1.8 L6 5.9 L9.8 1.8" fill="none" stroke="#606060" stroke-width="1.7"/></svg>
<svg style="position:absolute;left:1604px;top:250px" width="16" height="16" viewBox="0 0 16 16"><rect x="2.5" y="1.5" width="13" height="13" fill="#eaf2fb" stroke="#2f5f9e"/><rect x="3" y="2" width="12" height="3" fill="#2f6db5"/><path d="M4.5 7.5 H13.5 M4.5 9.5 H13.5 M4.5 11.5 H13.5" stroke="#2f5f9e" stroke-width="1"/><path d="M3 0.3 L5.8 3.1 L3 5.9 L0.2 3.1 Z" fill="#ffd21f" stroke="#b88a00" stroke-width="0.8"/></svg>
<div class="t" style="left:1625px;top:247px;height:22px;line-height:22px;font-size:14px;color:#000;"><span style="letter-spacing:-0.27px">IFTMIN</span><span style="letter-spacing:0.11px"> </span>[VDA007]</div>
<svg style="position:absolute;left:1608px;top:276px" width="8" height="12" viewBox="0 0 8 12"><path d="M1.5 1.9 L5.8 6 L1.5 10.1" fill="none" stroke="#a6a6a6" stroke-width="1.8"/></svg>
<svg style="position:absolute;left:1623px;top:272px" width="16" height="16" viewBox="0 0 16 16"><path d="M5.5 0.5 H10.5 V3.5 H15.5 V15.5 H11.5 V12.5 H4.5 V15.5 H0.5 V3.5 H5.5 Z" fill="#ff2424" stroke="#d82222"/></svg>
<div class="t" style="left:1644px;top:269px;height:22px;line-height:22px;font-size:14px;color:#000;"><span style="letter-spacing:-0.30px">BGM</span><span style="color:#737373"> <span style="letter-spacing:-0.12px">[A</span><span style="letter-spacing:0.11px"> </span><span style="letter-spacing:-0.10px">segment</span><span style="letter-spacing:0.11px"> </span><span style="display:inline-block;width:13.00px;transform:scaleX(1.114);transform-origin:0 50%">to</span><span style="letter-spacing:0.11px"> </span><span style="letter-spacing:-0.15px">indicate</span><span style="letter-spacing:0.11px"> </span><span style="letter-spacing:0.18px">the</span><span style="letter-spacing:0.11px"> </span>beginning<span style="letter-spacing:0.11px"> </span><span style="letter-spacing:0.16px">of</span></span></div>
<svg style="position:absolute;left:1608px;top:298px" width="8" height="12" viewBox="0 0 8 12"><path d="M1.5 1.9 L5.8 6 L1.5 10.1" fill="none" stroke="#a6a6a6" stroke-width="1.8"/></svg>
<svg style="position:absolute;left:1623px;top:294px" width="16" height="16" viewBox="0 0 16 16"><path d="M5.5 0.5 H10.5 V3.5 H15.5 V15.5 H11.5 V12.5 H4.5 V15.5 H0.5 V3.5 H5.5 Z" fill="#2f6db5" stroke="#255c9c"/></svg>
<div class="t" style="left:1644px;top:291px;height:22px;line-height:22px;font-size:14px;color:#000;"><span style="display:inline-block;width:25.00px;transform:scaleX(0.927);transform-origin:0 50%">CTA</span><span style="color:#737373"> <span style="letter-spacing:-0.12px">[A</span><span style="letter-spacing:0.11px"> </span><span style="letter-spacing:-0.10px">segment</span><span style="letter-spacing:0.11px"> </span><span style="display:inline-block;width:13.00px;transform:scaleX(1.114);transform-origin:0 50%">to</span><span style="letter-spacing:0.11px"> </span><span style="letter-spacing:0.08px">identify</span><span style="letter-spacing:0.11px"> </span><span style="display:inline-block;width:7.00px;transform:scaleX(0.900);transform-origin:0 50%">a</span><span style="letter-spacing:0.11px"> </span><span style="letter-spacing:-0.13px">person</span><span style="letter-spacing:0.11px"> </span><span style="letter-spacing:0.28px">or</span><span style="letter-spacing:0.11px"> </span><span style="letter-spacing:-0.11px">dep</span></span></div>
<svg style="position:absolute;left:1608px;top:320px" width="8" height="12" viewBox="0 0 8 12"><path d="M1.5 1.9 L5.8 6 L1.5 10.1" fill="none" stroke="#a6a6a6" stroke-width="1.8"/></svg>
<svg style="position:absolute;left:1623px;top:316px" width="16" height="16" viewBox="0 0 16 16"><path d="M5.5 0.5 H10.5 V3.5 H15.5 V15.5 H11.5 V12.5 H4.5 V15.5 H0.5 V3.5 H5.5 Z" fill="#2f6db5" stroke="#255c9c"/></svg>
<div class="t" style="left:1644px;top:313px;height:22px;line-height:22px;font-size:14px;color:#000;"><span style="letter-spacing:0.11px">COM</span><span style="color:#737373"> <span style="letter-spacing:-0.12px">[A</span><span style="letter-spacing:0.11px"> </span><span style="letter-spacing:-0.10px">segment</span><span style="letter-spacing:0.11px"> </span><span style="display:inline-block;width:13.00px;transform:scaleX(1.114);transform-origin:0 50%">to</span><span style="letter-spacing:0.11px"> </span><span style="letter-spacing:0.08px">identify</span><span style="letter-spacing:0.11px"> </span><span style="display:inline-block;width:7.00px;transform:scaleX(0.900);transform-origin:0 50%">a</span><span style="letter-spacing:0.11px"> </span><span style="letter-spacing:-0.04px">communicat</span></span></div>
<svg style="position:absolute;left:1608px;top:342px" width="8" height="12" viewBox="0 0 8 12"><path d="M1.5 1.9 L5.8 6 L1.5 10.1" fill="none" stroke="#a6a6a6" stroke-width="1.8"/></svg>
<svg style="position:absolute;left:1623px;top:338px" width="16" height="16" viewBox="0 0 16 16"><path d="M5.5 0.5 H10.5 V3.5 H15.5 V15.5 H11.5 V12.5 H4.5 V15.5 H0.5 V3.5 H5.5 Z" fill="#2f6db5" stroke="#255c9c"/></svg>
<div class="t" style="left:1644px;top:335px;height:22px;line-height:22px;font-size:14px;color:#000;"><span style="letter-spacing:-0.10px">DTM</span><span style="color:#737373"> <span style="letter-spacing:-0.12px">[A</span><span style="letter-spacing:0.11px"> </span><span style="letter-spacing:-0.10px">segment</span><span style="letter-spacing:0.11px"> </span><span style="display:inline-block;width:13.00px;transform:scaleX(1.114);transform-origin:0 50%">to</span><span style="letter-spacing:0.11px"> </span><span style="letter-spacing:-0.15px">indicate</span><span style="letter-spacing:0.11px"> </span><span style="display:inline-block;width:7.00px;transform:scaleX(0.900);transform-origin:0 50%">a</span><span style="letter-spacing:0.11px"> </span><span style="letter-spacing:-0.06px">date</span><span style="letter-spacing:0.11px"> </span><span style="letter-spacing:-0.11px">and</span><span style="letter-spacing:0.11px"> </span><span style="letter-spacing:0.14px">time</span></span></div>
<svg style="position:absolute;left:1608px;top:364px" width="8" height="12" viewBox="0 0 8 12"><path d="M1.5 1.9 L5.8 6 L1.5 10.1" fill="none" stroke="#a6a6a6" stroke-width="1.8"/></svg>
<svg style="position:absolute;left:1623px;top:360px" width="16" height="16" viewBox="0 0 16 16"><path d="M5.5 0.5 H10.5 V3.5 H15.5 V15.5 H11.5 V12.5 H4.5 V15.5 H0.5 V3.5 H5.5 Z" fill="#2f6db5" stroke="#255c9c"/></svg>
<div class="t" style="left:1644px;top:357px;height:22px;line-height:22px;font-size:14px;color:#000;"><span style="display:inline-block;width:22.00px;transform:scaleX(0.786);transform-origin:0 50%">TSR</span><span style="color:#737373"> <span style="letter-spacing:-0.12px">[A</span><span style="letter-spacing:0.11px"> </span><span style="letter-spacing:-0.10px">segment</span><span style="letter-spacing:0.11px"> </span><span style="display:inline-block;width:13.00px;transform:scaleX(1.114);transform-origin:0 50%">to</span><span style="letter-spacing:0.11px"> </span><span style="letter-spacing:0.08px">identify</span><span style="letter-spacing:0.11px"> </span><span style="letter-spacing:0.18px">the</span><span style="letter-spacing:0.11px"> </span><span style="letter-spacing:-0.07px">contract,</span><span style="letter-spacing:0.11px"> </span><span style="letter-spacing:-0.39px">co</span></span></div>
<svg style="position:absolute;left:1608px;top:386px" width="8" height="12" viewBox="0 0 8 12"><path d="M1.5 1.9 L5.8 6 L1.5 10.1" fill="none" stroke="#a6a6a6" stroke-width="1.8"/></svg>
<svg style="position:absolute;left:1623px;top:382px" width="16" height="16" viewBox="0 0 16 16"><path d="M5.5 0.5 H10.5 V3.5 H15.5 V15.5 H11.5 V12.5 H4.5 V15.5 H0.5 V3.5 H5.5 Z" fill="#2f6db5" stroke="#255c9c"/></svg>
<div class="t" style="left:1644px;top:379px;height:22px;line-height:22px;font-size:14px;color:#000;"><span style="display:inline-block;width:27.00px;transform:scaleX(0.913);transform-origin:0 50%">CUX</span><span style="color:#737373"> <span style="letter-spacing:-0.12px">[A</span><span style="letter-spacing:0.11px"> </span><span style="letter-spacing:-0.10px">segment</span><span style="letter-spacing:0.11px"> </span><span style="display:inline-block;width:13.00px;transform:scaleX(1.114);transform-origin:0 50%">to</span><span style="letter-spacing:0.11px"> </span><span style="letter-spacing:-0.15px">indicate</span><span style="letter-spacing:0.11px"> </span>default<span style="letter-spacing:0.11px"> </span><span style="letter-spacing:-0.24px">currenc</span></span></div>
<svg style="position:absolute;left:1608px;top:408px" width="8" height="12" viewBox="0 0 8 12"><path d="M1.5 1.9 L5.8 6 L1.5 10.1" fill="none" stroke="#a6a6a6" stroke-width="1.8"/></svg>
<svg style="position:absolute;left:1623px;top:404px" width="16" height="16" viewBox="0 0 16 16"><path d="M5.5 0.5 H10.5 V3.5 H15.5 V15.5 H11.5 V12.5 H4.5 V15.5 H0.5 V3.5 H5.5 Z" fill="#2f6db5" stroke="#255c9c"/></svg>
<div class="t" style="left:1644px;top:401px;height:22px;line-height:22px;font-size:14px;color:#000;"><span style="letter-spacing:0.37px">MOA</span><span style="color:#737373"> <span style="letter-spacing:-0.12px">[A</span><span style="letter-spacing:0.11px"> </span><span style="letter-spacing:-0.10px">segment</span><span style="letter-spacing:0.11px"> </span><span style="display:inline-block;width:13.00px;transform:scaleX(1.114);transform-origin:0 50%">to</span><span style="letter-spacing:0.11px"> </span><span style="letter-spacing:-0.15px">indicate</span><span style="letter-spacing:0.11px"> </span><span style="display:inline-block;width:7.00px;transform:scaleX(0.900);transform-origin:0 50%">a</span><span style="letter-spacing:0.11px"> </span><span style="letter-spacing:0.08px">monetary</span><span style="letter-spacing:0.11px"> </span><span style="letter-spacing:-0.39px">va</span></span></div>
<svg style="position:absolute;left:1608px;top:430px" width="8" height="12" viewBox="0 0 8 12"><path d="M1.5 1.9 L5.8 6 L1.5 10.1" fill="none" stroke="#a6a6a6" stroke-width="1.8"/></svg>
<svg style="position:absolute;left:1623px;top:426px" width="16" height="16" viewBox="0 0 16 16"><path d="M5.5 0.5 H10.5 V3.5 H15.5 V15.5 H11.5 V12.5 H4.5 V15.5 H0.5 V3.5 H5.5 Z" fill="#2f6db5" stroke="#255c9c"/></svg>
<div class="t" style="left:1644px;top:423px;height:22px;line-height:22px;font-size:14px;color:#000;"><span style="display:inline-block;width:22.00px;transform:scaleX(0.832);transform-origin:0 50%">FTX</span><span style="color:#737373"> <span style="letter-spacing:-0.12px">[A</span><span style="letter-spacing:0.11px"> </span><span style="letter-spacing:-0.10px">segment</span><span style="letter-spacing:0.11px"> </span><span style="display:inline-block;width:13.00px;transform:scaleX(1.114);transform-origin:0 50%">to</span><span style="letter-spacing:0.11px"> </span><span style="letter-spacing:-0.37px">specify</span><span style="letter-spacing:0.11px"> </span><span style="letter-spacing:-0.28px">free</span><span style="letter-spacing:0.11px"> </span><span style="letter-spacing:0.25px">form</span><span style="letter-spacing:0.11px"> </span><span style="letter-spacing:0.28px">or</span><span style="letter-spacing:0.11px"> </span><span style="letter-spacing:0.26px">pro</span></span></div>
<svg style="position:absolute;left:1608px;top:452px" width="8" height="12" viewBox="0 0 8 12"><path d="M1.5 1.9 L5.8 6 L1.5 10.1" fill="none" stroke="#a6a6a6" stroke-width="1.8"/></svg>
<svg style="position:absolute;left:1623px;top:448px" width="16" height="16" viewBox="0 0 16 16"><path d="M5.5 0.5 H10.5 V3.5 H15.5 V15.5 H11.5 V12.5 H4.5 V15.5 H0.5 V3.5 H5.5 Z" fill="#2f6db5" stroke="#255c9c"/></svg>
<div class="t" style="left:1644px;top:445px;height:22px;line-height:22px;font-size:14px;color:#000;"><span style="display:inline-block;width:26.00px;transform:scaleX(0.904);transform-origin:0 50%">CNT</span><span style="color:#737373"> <span style="letter-spacing:-0.12px">[A</span><span style="letter-spacing:0.11px"> </span><span style="letter-spacing:-0.10px">segment</span><span style="letter-spacing:0.11px"> </span><span style="display:inline-block;width:13.00px;transform:scaleX(1.114);transform-origin:0 50%">to</span><span style="letter-spacing:0.11px"> </span><span style="letter-spacing:-0.37px">specify</span><span style="letter-spacing:0.11px"> </span><span style="letter-spacing:0.09px">totals</span><span style="letter-spacing:0.11px"> </span><span style="letter-spacing:0.22px">for</span><span style="letter-spacing:0.11px"> </span><span style="display:inline-block;width:7.00px;transform:scaleX(0.900);transform-origin:0 50%">a</span><span style="letter-spacing:0.11px"> </span><span style="letter-spacing:-0.39px">cons</span></span></div>
<svg style="position:absolute;left:1608px;top:474px" width="8" height="12" viewBox="0 0 8 12"><path d="M1.5 1.9 L5.8 6 L1.5 10.1" fill="none" stroke="#a6a6a6" stroke-width="1.8"/></svg>
<svg style="position:absolute;left:1623px;top:470px" width="16" height="16" viewBox="0 0 16 16"><path d="M5.5 0.5 H10.5 V3.5 H15.5 V15.5 H11.5 V12.5 H4.5 V15.5 H0.5 V3.5 H5.5 Z" fill="#2f6db5" stroke="#255c9c"/></svg>
<div class="t" style="left:1644px;top:467px;height:22px;line-height:22px;font-size:14px;color:#000;"><span style="letter-spacing:-0.37px">DOC</span><span style="color:#737373"> <span style="letter-spacing:-0.12px">[A</span><span style="letter-spacing:0.11px"> </span><span style="letter-spacing:-0.10px">segment</span><span style="letter-spacing:0.11px"> </span><span style="display:inline-block;width:13.00px;transform:scaleX(1.114);transform-origin:0 50%">to</span><span style="letter-spacing:0.11px"> </span><span style="letter-spacing:-0.15px">indicate</span><span style="letter-spacing:0.11px"> </span><span style="letter-spacing:0.18px">the</span><span style="letter-spacing:0.11px"> </span><span style="letter-spacing:0.09px">number</span><span style="letter-spacing:0.11px"> </span><span style="letter-spacing:0.16px">of</span></span></div>
<svg style="position:absolute;left:1605px;top:496.6px" width="12" height="8" viewBox="0 0 12 8"><path d="M2.2 1.8 L6 5.9 L9.8 1.8" fill="none" stroke="#606060" stroke-width="1.7"/></svg>
<svg style="position:absolute;left:1623px;top:492px" width="16" height="16" viewBox="0 0 16 16"><path d="M5.5 0.5 H10.5 V3.5 H15.5 V15.5 H11.5 V12.5 H4.5 V15.5 H0.5 V3.5 H5.5 Z" fill="#2f6db5" stroke="#255c9c"/></svg>
<div class="t" style="left:1644px;top:489px;height:22px;line-height:22px;font-size:14px;color:#000;"><span style="display:inline-block;width:25.00px;transform:scaleX(0.892);transform-origin:0 50%">SG1</span><span style="color:#737373"> <span style="letter-spacing:-0.12px">[A</span><span style="letter-spacing:0.11px"> </span><span style="letter-spacing:0.24px">group</span><span style="letter-spacing:0.11px"> </span><span style="letter-spacing:0.16px">of</span><span style="letter-spacing:0.11px"> </span><span style="letter-spacing:-0.21px">segments</span><span style="letter-spacing:0.11px"> </span><span style="display:inline-block;width:13.00px;transform:scaleX(1.114);transform-origin:0 50%">to</span><span style="letter-spacing:0.11px"> </span><span style="letter-spacing:-0.37px">specify</span><span style="letter-spacing:0.11px"> </span><span style="letter-spacing:-0.11px">locati</span></span></div>
<svg style="position:absolute;left:1624px;top:518.6px" width="12" height="8" viewBox="0 0 12 8"><path d="M2.2 1.8 L6 5.9 L9.8 1.8" fill="none" stroke="#606060" stroke-width="1.7"/></svg>
<svg style="position:absolute;left:1642px;top:514px" width="16" height="16" viewBox="0 0 16 16"><path d="M5.5 0.5 H10.5 V3.5 H15.5 V15.5 H11.5 V12.5 H4.5 V15.5 H0.5 V3.5 H5.5 Z" fill="#ff2424" stroke="#d82222"/></svg>
<div class="t" style="left:1663px;top:511px;height:22px;line-height:22px;font-size:14px;color:#000;"><span style="display:inline-block;width:27.00px;transform:scaleX(0.938);transform-origin:0 50%">LOC</span><span style="color:#737373"> <span style="letter-spacing:-0.12px">[A</span><span style="letter-spacing:0.11px"> </span><span style="letter-spacing:-0.10px">segment</span><span style="letter-spacing:0.11px"> </span><span style="display:inline-block;width:13.00px;transform:scaleX(1.114);transform-origin:0 50%">to</span><span style="letter-spacing:0.11px"> </span><span style="letter-spacing:0.08px">identify</span><span style="letter-spacing:0.11px"> </span><span style="display:inline-block;width:7.00px;transform:scaleX(0.900);transform-origin:0 50%">a</span><span style="letter-spacing:0.11px"> </span>location<span style="letter-spacing:0.11px"> </span><span style="letter-spacing:-0.28px">an</span></span></div>
<svg style="position:absolute;left:1661px;top:536px" width="16" height="16" viewBox="0 0 16 16"><rect x="5" y="5" width="6" height="6" fill="#f02424"/><rect x="7" y="7" width="2" height="2" fill="#c01414"/></svg>
<div class="t" style="left:1682px;top:533px;height:22px;line-height:22px;font-size:14px;color:#000;"><span style="letter-spacing:0.22px">3227</span><span style="color:#737373"> <span style="letter-spacing:-0.20px">[Place/location</span><span style="letter-spacing:0.11px"> </span><span style="letter-spacing:-0.11px">qualifier</span><span style="letter-spacing:0.11px"> </span><span style="letter-spacing:-0.20px">[C]]</span></span></div>
<svg style="position:absolute;left:1646px;top:562px" width="8" height="12" viewBox="0 0 8 12"><path d="M1.5 1.9 L5.8 6 L1.5 10.1" fill="none" stroke="#a6a6a6" stroke-width="1.8"/></svg>
<svg style="position:absolute;left:1661px;top:558px" width="16" height="16" viewBox="0 0 16 16"><rect x="5" y="1" width="6" height="6" fill="#2a66b0"/><rect x="7" y="3" width="2" height="2" fill="#5a8cc8"/><rect x="1" y="8" width="6" height="6" fill="#2a66b0"/><rect x="3" y="10" width="2" height="2" fill="#5a8cc8"/><rect x="9" y="8" width="6" height="6" fill="#2a66b0"/><rect x="11" y="10" width="2" height="2" fill="#5a8cc8"/></svg>
<div class="t" style="left:1682px;top:555px;height:22px;line-height:22px;font-size:14px;color:#000;"><span style="letter-spacing:-0.11px">C517</span><span style="color:#737373"> [Identification<span style="letter-spacing:0.11px"> </span><span style="letter-spacing:0.16px">of</span><span style="letter-spacing:0.11px"> </span><span style="display:inline-block;width:7.00px;transform:scaleX(0.900);transform-origin:0 50%">a</span><span style="letter-spacing:0.11px"> </span>location<span style="letter-spacing:0.11px"> </span><span style="letter-spacing:0.11px">by</span><span style="letter-spacing:0.11px"> </span><span style="display:inline-block;width:6.00px;transform:scaleX(0.857);transform-origin:0 50%">c</span></span></div>
<svg style="position:absolute;left:1646px;top:584px" width="8" height="12" viewBox="0 0 8 12"><path d="M1.5 1.9 L5.8 6 L1.5 10.1" fill="none" stroke="#a6a6a6" stroke-width="1.8"/></svg>
<svg style="position:absolute;left:1661px;top:580px" width="16" height="16" viewBox="0 0 16 16"><rect x="5" y="1" width="6" height="6" fill="#2a66b0"/><rect x="7" y="3" width="2" height="2" fill="#5a8cc8"/><rect x="1" y="8" width="6" height="6" fill="#2a66b0"/><rect x="3" y="10" width="2" height="2" fill="#5a8cc8"/><rect x="9" y="8" width="6" height="6" fill="#2a66b0"/><rect x="11" y="10" width="2" height="2" fill="#5a8cc8"/></svg>
<div class="t" style="left:1682px;top:577px;height:22px;line-height:22px;font-size:14px;color:#000;"><span style="letter-spacing:-0.11px">C519</span><span style="color:#737373"> [Identification<span style="letter-spacing:0.11px"> </span><span style="letter-spacing:0.18px">the</span><span style="letter-spacing:0.11px"> </span><span style="letter-spacing:0.09px">first</span><span style="letter-spacing:0.11px"> </span><span style="letter-spacing:-0.11px">related</span><span style="letter-spacing:0.11px"> </span><span style="letter-spacing:-0.11px">l</span></span></div>
<svg style="position:absolute;left:1646px;top:606px" width="8" height="12" viewBox="0 0 8 12"><path d="M1.5 1.9 L5.8 6 L1.5 10.1" fill="none" stroke="#a6a6a6" stroke-width="1.8"/></svg>
<svg style="position:absolute;left:1661px;top:602px" width="16" height="16" viewBox="0 0 16 16"><rect x="5" y="1" width="6" height="6" fill="#2a66b0"/><rect x="7" y="3" width="2" height="2" fill="#5a8cc8"/><rect x="1" y="8" width="6" height="6" fill="#2a66b0"/><rect x="3" y="10" width="2" height="2" fill="#5a8cc8"/><rect x="9" y="8" width="6" height="6" fill="#2a66b0"/><rect x="11" y="10" width="2" height="2" fill="#5a8cc8"/></svg>
<div class="t" style="left:1682px;top:599px;height:22px;line-height:22px;font-size:14px;color:#000;"><span style="letter-spacing:-0.11px">C553</span><span style="color:#737373"> [Identification<span style="letter-spacing:0.11px"> </span><span style="letter-spacing:0.16px">of</span><span style="letter-spacing:0.11px"> </span><span style="letter-spacing:-0.35px">second</span><span style="letter-spacing:0.11px"> </span><span style="letter-spacing:-0.11px">related</span></span></div>
<div style="left:1659px;top:621px;width:183px;height:22px;background:#f0f0f0;border:1px solid #d9d9d9"></div>
<svg style="position:absolute;left:1661px;top:624px" width="16" height="16" viewBox="0 0 16 16"><rect x="5" y="5" width="6" height="6" fill="#2f6db5"/><rect x="7" y="7" width="2" height="2" fill="#1d4f8c"/></svg>
<div class="t" style="left:1682px;top:621px;height:22px;line-height:22px;font-size:14px;color:#000;"><span style="letter-spacing:0.22px">5479</span><span style="color:#000"> <span style="letter-spacing:-0.31px">[Relation,</span><span style="letter-spacing:0.11px"> </span><span style="letter-spacing:-0.23px">coded</span><span style="letter-spacing:0.11px"> </span><span style="letter-spacing:-0.20px">[C]]</span></span></div>
<svg style="position:absolute;left:1661px;top:646px" width="16" height="16" viewBox="0 0 16 16"><path d="M0 9 L4.6 8.4 L5 6 H11 L11.4 8.4 L16 9 V13.8 H0 Z" fill="#2f6db5"/></svg>
<div class="t" style="left:1682px;top:643px;height:22px;line-height:22px;font-size:14px;color:#000;"><span style="display:inline-block;width:40.00px;transform:scaleX(0.918);transform-origin:0 50%">S-END</span><span style="color:#737373"> <span style="display:inline-block;width:27.00px;transform:scaleX(0.938);transform-origin:0 50%">[End</span><span style="letter-spacing:0.11px"> </span><span style="letter-spacing:0.16px">of</span><span style="letter-spacing:0.11px"> </span><span style="letter-spacing:-0.42px">LOC]</span></span></div>
<svg style="position:absolute;left:1627px;top:672px" width="8" height="12" viewBox="0 0 8 12"><path d="M1.5 1.9 L5.8 6 L1.5 10.1" fill="none" stroke="#a6a6a6" stroke-width="1.8"/></svg>
<svg style="position:absolute;left:1642px;top:668px" width="16" height="16" viewBox="0 0 16 16"><path d="M5.5 0.5 H10.5 V3.5 H15.5 V15.5 H11.5 V12.5 H4.5 V15.5 H0.5 V3.5 H5.5 Z" fill="#2f6db5" stroke="#255c9c"/></svg>
<div class="t" style="left:1663px;top:665px;height:22px;line-height:22px;font-size:14px;color:#000;"><span style="letter-spacing:-0.10px">DTM</span><span style="color:#737373"> <span style="letter-spacing:-0.12px">[A</span><span style="letter-spacing:0.11px"> </span><span style="letter-spacing:-0.10px">segment</span><span style="letter-spacing:0.11px"> </span><span style="display:inline-block;width:13.00px;transform:scaleX(1.114);transform-origin:0 50%">to</span><span style="letter-spacing:0.11px"> </span><span style="letter-spacing:-0.15px">indicate</span><span style="letter-spacing:0.11px"> </span><span style="letter-spacing:-0.36px">date(s)</span><span style="letter-spacing:0.11px"> </span><span style="letter-spacing:-0.11px">and</span></span></div>
<svg style="position:absolute;left:1642px;top:690px" width="16" height="16" viewBox="0 0 16 16"><path d="M0 9 L4.6 8.4 L5 6 H11 L11.4 8.4 L16 9 V13.8 H0 Z" fill="#2f6db5"/></svg>
<div class="t" style="left:1663px;top:687px;height:22px;line-height:22px;font-size:14px;color:#000;"><span style="display:inline-block;width:50.00px;transform:scaleX(0.918);transform-origin:0 50%">SG-END</span><span style="color:#737373"> <span style="display:inline-block;width:27.00px;transform:scaleX(0.938);transform-origin:0 50%">[End</span><span style="letter-spacing:0.11px"> </span><span style="letter-spacing:0.16px">of</span><span style="letter-spacing:0.11px"> </span><span style="display:inline-block;width:29.00px;transform:scaleX(0.909);transform-origin:0 50%">SG1]</span></span></div>
<svg style="position:absolute;left:1608px;top:716px" width="8" height="12" viewBox="0 0 8 12"><path d="M1.5 1.9 L5.8 6 L1.5 10.1" fill="none" stroke="#a6a6a6" stroke-width="1.8"/></svg>
<svg style="position:absolute;left:1623px;top:712px" width="16" height="16" viewBox="0 0 16 16"><path d="M5.5 0.5 H10.5 V3.5 H15.5 V15.5 H11.5 V12.5 H4.5 V15.5 H0.5 V3.5 H5.5 Z" fill="#2f6db5" stroke="#255c9c"/></svg>
<div class="t" style="left:1644px;top:709px;height:22px;line-height:22px;font-size:14px;color:#000;"><span style="display:inline-block;width:25.00px;transform:scaleX(0.892);transform-origin:0 50%">SG2</span><span style="color:#737373"> <span style="letter-spacing:-0.12px">[A</span><span style="letter-spacing:0.11px"> </span><span style="letter-spacing:0.24px">group</span><span style="letter-spacing:0.11px"> </span><span style="letter-spacing:0.16px">of</span><span style="letter-spacing:0.11px"> </span><span style="letter-spacing:-0.21px">segments</span><span style="letter-spacing:0.11px"> </span><span style="display:inline-block;width:13.00px;transform:scaleX(1.114);transform-origin:0 50%">to</span><span style="letter-spacing:0.11px"> </span><span style="letter-spacing:-0.37px">specify</span><span style="letter-spacing:0.11px"> </span><span style="letter-spacing:0.25px">term</span></span></div>
<svg style="position:absolute;left:1608px;top:738px" width="8" height="12" viewBox="0 0 8 12"><path d="M1.5 1.9 L5.8 6 L1.5 10.1" fill="none" stroke="#a6a6a6" stroke-width="1.8"/></svg>
<svg style="position:absolute;left:1623px;top:734px" width="16" height="16" viewBox="0 0 16 16"><path d="M5.5 0.5 H10.5 V3.5 H15.5 V15.5 H11.5 V12.5 H4.5 V15.5 H0.5 V3.5 H5.5 Z" fill="#2f6db5" stroke="#255c9c"/></svg>
<div class="t" style="left:1644px;top:731px;height:22px;line-height:22px;font-size:14px;color:#000;"><span style="display:inline-block;width:25.00px;transform:scaleX(0.892);transform-origin:0 50%">SG3</span><span style="color:#737373"> <span style="letter-spacing:-0.12px">[A</span><span style="letter-spacing:0.11px"> </span><span style="letter-spacing:0.24px">group</span><span style="letter-spacing:0.11px"> </span><span style="letter-spacing:0.16px">of</span><span style="letter-spacing:0.11px"> </span><span style="letter-spacing:-0.21px">segments</span><span style="letter-spacing:0.11px"> </span>containing<span style="letter-spacing:0.11px"> </span><span style="display:inline-block;width:7.00px;transform:scaleX(0.900);transform-origin:0 50%">a</span><span style="letter-spacing:0.11px"> </span><span style="letter-spacing:-0.11px">ref</span></span></div>
</div></div>
<div style="left:382px;top:113px;width:18px;height:638px;background:#fff;border-left:1px solid #d4d4d4"></div>
<div style="left:382px;top:115px;width:18px;height:19px;background:#fff;border:1px solid #cfcfcf"></div>
<svg style="position:absolute;left:385px;top:118.5px" width="12" height="12" viewBox="0 0 12 12"><path d="M-4 2 L0 -2 L4 2" fill="none" stroke="#505050" stroke-width="1.3" transform="translate(6 6)"/></svg>
<div style="left:382px;top:732px;width:18px;height:19px;background:#fff;border:1px solid #cfcfcf"></div>
<svg style="position:absolute;left:385px;top:735.5px" width="12" height="12" viewBox="0 0 12 12"><path d="M-4 -2 L0 2 L4 -2" fill="none" stroke="#505050" stroke-width="1.3" transform="translate(6 6)"/></svg>
<div style="left:382px;top:422px;width:18px;height:197px;background:#dddddd;border:1px solid #a6a6a6;border-right:none"></div>
<div style="left:387px;top:517px;width:8px;height:1.4px;background:#505050;"></div>
<div style="left:387px;top:520px;width:8px;height:1.4px;background:#505050;"></div>
<div style="left:387px;top:523px;width:8px;height:1.4px;background:#505050;"></div>
<div style="left:24px;top:751px;width:359px;height:19px;background:#fff;border-top:1px solid #d0d0d0;border-bottom:1px solid #d0d0d0"></div>
<div style="left:24px;top:751px;width:19px;height:19px;background:#fff;border:1px solid #cfcfcf"></div>
<svg style="position:absolute;left:27.5px;top:754.5px" width="12" height="12" viewBox="0 0 12 12"><path d="M2 -4 L-2 0 L2 4" fill="none" stroke="#505050" stroke-width="1.3" transform="translate(6 6)"/></svg>
<div style="left:364px;top:751px;width:19px;height:19px;background:#fff;border:1px solid #cfcfcf"></div>
<svg style="position:absolute;left:367.5px;top:754.5px" width="12" height="12" viewBox="0 0 12 12"><path d="M-2 -4 L2 0 L-2 4" fill="none" stroke="#505050" stroke-width="1.3" transform="translate(6 6)"/></svg>
<div style="left:43px;top:751px;width:202px;height:19px;background:#dddddd;border:1px solid #a6a6a6"></div>
<div style="left:140px;top:756.5px;width:1.4px;height:8px;background:#505050;"></div>
<div style="left:143px;top:756.5px;width:1.4px;height:8px;background:#505050;"></div>
<div style="left:146px;top:756.5px;width:1.4px;height:8px;background:#505050;"></div>
<div style="left:383px;top:751px;width:17px;height:20px;background:#f0f0f0;"></div>
<div style="left:1901px;top:113px;width:15px;height:638px;background:#fff;border-left:1px solid #d4d4d4"></div>
<div style="left:1901px;top:115px;width:15px;height:19px;background:#fff;border:1px solid #cfcfcf"></div>
<svg style="position:absolute;left:1902.5px;top:118.5px" width="12" height="12" viewBox="0 0 12 12"><path d="M-4 2 L0 -2 L4 2" fill="none" stroke="#505050" stroke-width="1.3" transform="translate(6 6)"/></svg>
<div style="left:1901px;top:732px;width:15px;height:19px;background:#fff;border:1px solid #cfcfcf"></div>
<svg style="position:absolute;left:1902.5px;top:735.5px" width="12" height="12" viewBox="0 0 12 12"><path d="M-4 -2 L0 2 L4 -2" fill="none" stroke="#505050" stroke-width="1.3" transform="translate(6 6)"/></svg>
<div style="left:1901px;top:133px;width:15px;height:429px;background:#dddddd;border:1px solid #a6a6a6;border-right:none"></div>
<div style="left:1904.5px;top:345px;width:8px;height:1.4px;background:#505050;"></div>
<div style="left:1904.5px;top:348px;width:8px;height:1.4px;background:#505050;"></div>
<div style="left:1904.5px;top:351px;width:8px;height:1.4px;background:#505050;"></div>
<div style="left:1544px;top:751px;width:357px;height:19px;background:#fff;border-top:1px solid #d0d0d0;border-bottom:1px solid #d0d0d0"></div>
<div style="left:1544px;top:751px;width:19px;height:19px;background:#fff;border:1px solid #cfcfcf"></div>
<svg style="position:absolute;left:1547.5px;top:754.5px" width="12" height="12" viewBox="0 0 12 12"><path d="M2 -4 L-2 0 L2 4" fill="none" stroke="#505050" stroke-width="1.3" transform="translate(6 6)"/></svg>
<div style="left:1882px;top:751px;width:19px;height:19px;background:#fff;border:1px solid #cfcfcf"></div>
<svg style="position:absolute;left:1885.5px;top:754.5px" width="12" height="12" viewBox="0 0 12 12"><path d="M-2 -4 L2 0 L-2 4" fill="none" stroke="#505050" stroke-width="1.3" transform="translate(6 6)"/></svg>
<div style="left:1562px;top:751px;width:67px;height:19px;background:#dddddd;border:1px solid #a6a6a6"></div>
<div style="left:1593px;top:756.5px;width:1.4px;height:8px;background:#505050;"></div>
<div style="left:1596px;top:756.5px;width:1.4px;height:8px;background:#505050;"></div>
<div style="left:1599px;top:756.5px;width:1.4px;height:8px;background:#505050;"></div>
<div style="left:1901px;top:751px;width:15px;height:21px;background:#f0f0f0;"></div>
<div style="left:1519px;top:113px;width:17px;height:659px;background:#fff;border-left:1px solid #d4d4d4"></div>
<div style="left:1519px;top:113px;width:17px;height:19px;background:#fff;border:1px solid #cfcfcf"></div>
<svg style="position:absolute;left:1521.5px;top:116.5px" width="12" height="12" viewBox="0 0 12 12"><path d="M-4 2 L0 -2 L4 2" fill="none" stroke="#858585" stroke-width="1.3" transform="translate(6 6)"/></svg>
<div style="left:1519px;top:753px;width:17px;height:19px;background:#fff;border:1px solid #cfcfcf"></div>
<svg style="position:absolute;left:1521.5px;top:756.5px" width="12" height="12" viewBox="0 0 12 12"><path d="M-4 -2 L0 2 L4 -2" fill="none" stroke="#858585" stroke-width="1.3" transform="translate(6 6)"/></svg>
<div style="left:24px;top:87px;width:157px;height:26px;background:#fff;"></div>
<svg style="position:absolute;left:28px;top:92px" width="14" height="14" viewBox="0 0 14 14"><path d="M0.5 0 V14 M0.5 7 H3" stroke="#222" fill="none"/><path d="M3 0 H9.5 L13 3.5 V13 H3 Z" fill="#e67300"/><path d="M9.5 0 V3.5 H13 Z" fill="#5a3418"/><path d="M5 3.5 H8.5 M5 5.5 H11 M5 7.5 H11 M5 9.5 H11 M5 11.5 H11" stroke="#4a2a10" stroke-width="1"/></svg>
<div class="t" style="left:47px;top:88.5px;height:22px;line-height:22px;font-size:14px;color:#000;"><span style="letter-spacing:-0.33px">Quelle:</span><span style="letter-spacing:0.11px"> </span><span style="display:inline-block;width:62.00px;transform:scaleX(0.889);transform-origin:0 50%">FLATPLUS</span></div>
<svg style="position:absolute;left:163px;top:93.5px" width="11" height="11" viewBox="0 0 11 11"><path d="M0.5 2 L2 0.5 L5.5 4 L9 0.5 L10.5 2 L7 5.5 L10.5 9 L9 10.5 L5.5 7 L2 10.5 L0.5 9 L4 5.5 Z" fill="none" stroke="#4d4d4d" stroke-width="1.05"/></svg>
<svg style="position:absolute;left:330px;top:88.8px" width="17" height="17" viewBox="0 0 17 17"><path d="M5.8 4.4 A4.1 4.1 0 0 0 5.8 12.6" fill="none" stroke="#7d7d2a" stroke-width="3.2"/><path d="M10.8 4.4 A4.1 4.1 0 0 1 10.8 12.6" fill="none" stroke="#7d7d2a" stroke-width="3.2"/><path d="M10.8 0.4 V8.4 L6.6 4.4 Z" fill="#fff" stroke="#7d7d2a" stroke-width="1"/><path d="M5.8 8.8 V16.6 L10 12.6 Z" fill="#fff" stroke="#7d7d2a" stroke-width="1"/><path d="M6.2 4.4 A4.1 4.1 0 0 0 6.2 12.6" fill="none" stroke="#fff" stroke-width="1.2"/><path d="M10.4 4.4 A4.1 4.1 0 0 1 10.4 12.6" fill="none" stroke="#fff" stroke-width="1.2"/></svg>
<svg style="position:absolute;left:355px;top:92px" width="12" height="13" viewBox="0 0 12 13"><rect x="0" y="0.2" width="12" height="1.8" fill="#3c3c3c"/><path d="M0.8 3.3 H11.2 L8 7.2 V12 H4 V7.2 Z" fill="#484848"/></svg>
<svg style="position:absolute;left:379px;top:92px" width="10" height="10" viewBox="0 0 10 10"><rect x="0.5" y="0.5" width="9" height="9" fill="#fff" stroke="#555"/><path d="M0.5 2.5 H9.5" stroke="#555"/></svg>
<div style="left:404px;top:88px;width:187px;height:25px;background:#fff;"></div>
<svg style="position:absolute;left:411px;top:92.5px" width="17" height="14" viewBox="0 0 17 14"><path d="M0.7 1 V13.5 M15.7 1 V13.5 M0.7 7 H3.6 M12.8 7 H15.7" stroke="#2a2420" stroke-width="1.3" fill="none"/><path d="M4.6 0.6 H9.8 L12.9 3.7 V12.4 Q12.9 13.4 11.9 13.4 H4.6 Q3.6 13.4 3.6 12.4 V1.6 Q3.6 0.6 4.6 0.6 Z" fill="#fff" stroke="#2a2420" stroke-width="1.2"/><path d="M9.6 0.8 V3.9 H12.7" fill="none" stroke="#2a2420" stroke-width="1"/><path d="M5.3 4 H8.2 M5.3 6.3 H11.2 M5.3 8.6 H11.2 M5.3 10.9 H11.2" stroke="#2a2420" stroke-width="1.2"/></svg>
<div class="t" style="left:431px;top:88.5px;height:22px;line-height:22px;font-size:14px;color:#000;"><span style="letter-spacing:-0.18px">Mapping_flat_edi.map</span></div>
<svg style="position:absolute;left:572px;top:93.5px" width="11" height="11" viewBox="0 0 11 11"><path d="M0.5 2 L2 0.5 L5.5 4 L9 0.5 L10.5 2 L7 5.5 L10.5 9 L9 10.5 L5.5 7 L2 10.5 L0.5 9 L4 5.5 Z" fill="none" stroke="#4d4d4d" stroke-width="1.05"/></svg>
<svg style="position:absolute;left:1493px;top:92px" width="10" height="4" viewBox="0 0 10 4"><rect x="0.5" y="0.5" width="9" height="3" fill="#fff" stroke="#666"/></svg>
<svg style="position:absolute;left:1516px;top:92px" width="10" height="10" viewBox="0 0 10 10"><rect x="0.5" y="0.5" width="9" height="9" fill="#fff" stroke="#555"/><path d="M0.5 2.5 H9.5" stroke="#555"/></svg>
<div style="left:1540px;top:88px;width:133px;height:25px;background:#fff;"></div>
<svg style="position:absolute;left:1551px;top:92px" width="14" height="14" viewBox="0 0 14 14"><path d="M13.5 0 V14 M11 7 H13.5" stroke="#222" fill="none"/><path d="M0 0 H7 L10.5 3.5 V13.5 H0 Z" fill="#1d4f8c"/><path d="M2 3.5 H6 M2 5.5 H8.5 M2 7.5 H8.5 M2 9.5 H8.5 M2 11.5 H8.5" stroke="#fff" stroke-width="1"/></svg>
<div class="t" style="left:1568px;top:88.5px;height:22px;line-height:22px;font-size:14px;color:#000;"><span style="display:inline-block;width:24.00px;transform:scaleX(0.908);transform-origin:0 50%">Ziel:</span><span style="letter-spacing:0.11px"> </span><span style="display:inline-block;width:53.00px;transform:scaleX(0.896);transform-origin:0 50%">EDIFACT</span></div>
<svg style="position:absolute;left:1655px;top:93.5px" width="11" height="11" viewBox="0 0 11 11"><path d="M0.5 2 L2 0.5 L5.5 4 L9 0.5 L10.5 2 L7 5.5 L10.5 9 L9 10.5 L5.5 7 L2 10.5 L0.5 9 L4 5.5 Z" fill="none" stroke="#4d4d4d" stroke-width="1.05"/></svg>
<svg style="position:absolute;left:1849px;top:88.8px" width="17" height="17" viewBox="0 0 17 17"><path d="M5.8 4.4 A4.1 4.1 0 0 0 5.8 12.6" fill="none" stroke="#7d7d2a" stroke-width="3.2"/><path d="M10.8 4.4 A4.1 4.1 0 0 1 10.8 12.6" fill="none" stroke="#7d7d2a" stroke-width="3.2"/><path d="M10.8 0.4 V8.4 L6.6 4.4 Z" fill="#fff" stroke="#7d7d2a" stroke-width="1"/><path d="M5.8 8.8 V16.6 L10 12.6 Z" fill="#fff" stroke="#7d7d2a" stroke-width="1"/><path d="M6.2 4.4 A4.1 4.1 0 0 0 6.2 12.6" fill="none" stroke="#fff" stroke-width="1.2"/><path d="M10.4 4.4 A4.1 4.1 0 0 1 10.4 12.6" fill="none" stroke="#fff" stroke-width="1.2"/></svg>
<svg style="position:absolute;left:1874px;top:92px" width="12" height="13" viewBox="0 0 12 13"><rect x="0" y="0.2" width="12" height="1.8" fill="#3c3c3c"/><path d="M0.8 3.3 H11.2 L8 7.2 V12 H4 V7.2 Z" fill="#484848"/></svg>
<svg style="position:absolute;left:1898px;top:92px" width="10" height="10" viewBox="0 0 10 10"><rect x="0.5" y="0.5" width="9" height="9" fill="#fff" stroke="#555"/><path d="M0.5 2.5 H9.5" stroke="#555"/></svg>
<div style="left:24px;top:783px;width:253px;height:23px;background:#fff;"></div>
<svg style="position:absolute;left:28px;top:785px" width="14" height="14" viewBox="0 0 14 14"><path d="M0.5 0 V14 M0.5 7 H3" stroke="#222" fill="none"/><path d="M3 0 H9.5 L13 3.5 V13 H3 Z" fill="#e67300"/><path d="M9.5 0 V3.5 H13 Z" fill="#5a3418"/><path d="M5 3.5 H8.5 M5 5.5 H11 M5 7.5 H11 M5 9.5 H11 M5 11.5 H11" stroke="#4a2a10" stroke-width="1"/></svg>
<div class="t" style="left:48px;top:782px;height:22px;line-height:22px;font-size:14px;color:#000;"><span style="display:inline-block;width:62.00px;transform:scaleX(0.889);transform-origin:0 50%">FLATPLUS</span><span style="letter-spacing:0.11px"> </span><span style="letter-spacing:0.11px"> </span><span style="letter-spacing:0.04px">Konfiguration</span><span style="letter-spacing:0.11px"> </span><span style="letter-spacing:-0.35px">(Quelle)</span></div>
<svg style="position:absolute;left:258px;top:787px" width="11" height="11" viewBox="0 0 11 11"><path d="M0.5 2 L2 0.5 L5.5 4 L9 0.5 L10.5 2 L7 5.5 L10.5 9 L9 10.5 L5.5 7 L2 10.5 L0.5 9 L4 5.5 Z" fill="none" stroke="#4d4d4d" stroke-width="1.05"/></svg>
<svg style="position:absolute;left:356px;top:785px" width="10" height="4" viewBox="0 0 10 4"><rect x="0.5" y="0.5" width="9" height="3" fill="#fff" stroke="#666"/></svg>
<svg style="position:absolute;left:379px;top:785px" width="10" height="10" viewBox="0 0 10 10"><rect x="0.5" y="0.5" width="9" height="9" fill="#fff" stroke="#555"/><path d="M0.5 2.5 H9.5" stroke="#555"/></svg>
<div style="left:1540px;top:783px;width:230px;height:23px;background:#fff;"></div>
<svg style="position:absolute;left:1551px;top:785px" width="14" height="14" viewBox="0 0 14 14"><path d="M13.5 0 V14 M11 7 H13.5" stroke="#222" fill="none"/><path d="M0 0 H7 L10.5 3.5 V13.5 H0 Z" fill="#1d4f8c"/><path d="M2 3.5 H6 M2 5.5 H8.5 M2 7.5 H8.5 M2 9.5 H8.5 M2 11.5 H8.5" stroke="#fff" stroke-width="1"/></svg>
<div class="t" style="left:1568px;top:782px;height:22px;line-height:22px;font-size:14px;color:#000;"><span style="display:inline-block;width:53.00px;transform:scaleX(0.896);transform-origin:0 50%">EDIFACT</span><span style="letter-spacing:0.11px"> </span><span style="letter-spacing:0.11px"> </span><span style="letter-spacing:0.04px">Konfiguration</span><span style="letter-spacing:0.11px"> </span><span style="display:inline-block;width:29.00px;transform:scaleX(0.910);transform-origin:0 50%">(Ziel)</span></div>
<svg style="position:absolute;left:1751px;top:787px" width="11" height="11" viewBox="0 0 11 11"><path d="M0.5 2 L2 0.5 L5.5 4 L9 0.5 L10.5 2 L7 5.5 L10.5 9 L9 10.5 L5.5 7 L2 10.5 L0.5 9 L4 5.5 Z" fill="none" stroke="#4d4d4d" stroke-width="1.05"/></svg>
<svg style="position:absolute;left:1875px;top:785px" width="10" height="4" viewBox="0 0 10 4"><rect x="0.5" y="0.5" width="9" height="3" fill="#fff" stroke="#666"/></svg>
<svg style="position:absolute;left:1898px;top:785px" width="10" height="10" viewBox="0 0 10 10"><rect x="0.5" y="0.5" width="9" height="9" fill="#fff" stroke="#555"/><path d="M0.5 2.5 H9.5" stroke="#555"/></svg>
<div style="left:407px;top:113px;width:222px;height:659px;background:#f6e4d1;"></div>
<div style="left:629px;top:113px;width:334px;height:659px;background:#eeeeee;border-left:1px solid #b9b9b9"></div>
<div style="left:963px;top:113px;width:334px;height:659px;background:#fff;border-left:1px solid #b9b9b9"></div>
<div style="left:1297px;top:113px;width:222px;height:659px;background:#ddecfb;border-left:1px solid #b9b9b9"></div>
<div style="left:412px;top:183px;width:1px;height:181px;background:#111;"></div>
<div style="left:412px;top:183px;width:5px;height:1px;background:#111;"></div>
<div style="left:412px;top:243px;width:5px;height:1px;background:#111;"></div>
<div style="left:412px;top:303px;width:5px;height:1px;background:#111;"></div>
<div style="left:412px;top:363px;width:5px;height:1px;background:#111;"></div>
<div style="left:616px;top:183px;width:337px;height:1px;background:#111;"></div>
<div style="left:616px;top:243px;width:43px;height:1px;background:#111;"></div>
<div style="left:942px;top:243px;width:11px;height:1px;background:#111;"></div>
<div style="left:973px;top:243px;width:334px;height:1px;background:#111;"></div>
<div style="left:616px;top:303px;width:337px;height:1px;background:#111;"></div>
<div style="left:973px;top:303px;width:334px;height:1px;background:#111;"></div>
<div style="left:616px;top:363px;width:337px;height:1px;background:#111;"></div>
<div style="left:973px;top:363px;width:10px;height:1px;background:#111;"></div>
<div style="left:953px;top:173px;width:20px;height:20px;background:#e4e4e4;border:1px solid #3a3a3a;border-radius:50%"></div>
<div style="left:953px;top:233px;width:20px;height:20px;background:#e4e4e4;border:1px solid #3a3a3a;border-radius:50%"></div>
<div style="left:953px;top:293px;width:20px;height:20px;background:#e4e4e4;border:1px solid #3a3a3a;border-radius:50%"></div>
<div style="left:953px;top:353px;width:20px;height:20px;background:#e4e4e4;border:1px solid #3a3a3a;border-radius:50%"></div>
<div style="left:417px;top:173px;width:199px;height:20px;background:#ffa030;border:1px solid #1c1c1c;border-radius:10px"></div>
<div class="a" style="left:427px;top:175.5px;height:16px;line-height:16px;font-size:12px;color:#000;font-weight:bold;letter-spacing:0.14px;">512 (1)</div>
<div style="left:417px;top:233px;width:199px;height:20px;background:#ffbe5c;border:1px solid #1c1c1c;border-radius:10px"></div>
<div class="a" style="left:427px;top:235.5px;height:16px;line-height:16px;font-size:12px;color:#000;letter-spacing:0.11px;">01 (1)</div>
<div style="left:417px;top:293px;width:199px;height:20px;background:#ffbe5c;border:1px solid #1c1c1c;border-radius:10px"></div>
<div class="a" style="left:427px;top:295.5px;height:16px;line-height:16px;font-size:12px;color:#000;letter-spacing:0.11px;">02 (1)</div>
<div style="left:417px;top:353px;width:199px;height:20px;background:#ffbe5c;border:1px solid #1c1c1c;border-radius:10px"></div>
<div class="a" style="left:427px;top:355.5px;height:16px;line-height:16px;font-size:12px;color:#000;letter-spacing:-0.04px;">S-END (1)</div>
<div class="a" style="left:417px;top:194px;height:16px;line-height:16px;font-size:11px;color:#000;letter-spacing:-0.09px;">unique delivery instruction data</div>
<div class="a" style="left:417px;top:254px;height:16px;line-height:16px;font-size:11px;color:#000;letter-spacing:-0.23px;">Seg: SG1-512</div>
<div class="a" style="left:417px;top:267px;height:16px;line-height:16px;font-size:11px;color:#000;letter-spacing:-0.03px;">Record type</div>
<div class="a" style="left:417px;top:314px;height:16px;line-height:16px;font-size:11px;color:#000;letter-spacing:-0.23px;">Seg: SG1-512</div>
<div class="a" style="left:417px;top:327px;height:16px;line-height:16px;font-size:11px;color:#000;letter-spacing:-0.08px;">Version number</div>
<div class="a" style="left:417px;top:374px;height:16px;line-height:16px;font-size:11px;color:#000;letter-spacing:-0.23px;">Seg: SG1-512</div>
<div class="a" style="left:417px;top:387px;height:16px;line-height:16px;font-size:11px;color:#000;letter-spacing:-0.34px;">Segment End</div>
<div style="left:659px;top:233px;width:284px;height:56px;background:#d9d9d9;border:1px solid #1c1c1c;border-radius:7px"></div>
<div style="left:659px;top:233px;width:284px;height:20px;background:#b4b4b4;border:1px solid #1c1c1c;border-radius:8px"></div>
<div class="a" style="left:663px;top:235.5px;height:16px;line-height:16px;font-size:12px;color:#000;letter-spacing:0.16px;">Zeichenketten - Bedingungen</div>
<div class="t" style="left:668px;top:253px;height:22px;line-height:22px;font-size:14px;color:#000;"><span style="letter-spacing:-0.33px">source</span><span style="letter-spacing:0.11px"> </span><span style="display:inline-block;width:14.00px;transform:scaleX(1.161);transform-origin:0 50%">!=</span><span style="letter-spacing:0.11px"> </span><span style="display:inline-block;width:49.00px;transform:scaleX(0.913);transform-origin:0 50%">*EMPTY</span></div>
<div style="left:983px;top:353px;width:284px;height:56px;background:#e4e4e4;border:1px solid #1c1c1c;border-radius:7px"></div>
<div style="left:983px;top:353px;width:284px;height:20px;background:#f4f4f4;border:1px solid #1c1c1c;border-radius:9px"></div>
<div class="a" style="left:988px;top:355.5px;height:16px;line-height:16px;font-size:12px;color:#000;letter-spacing:0.05px;">Aufgaben (2)</div>
<div class="a" style="left:992px;top:372.5px;height:16px;line-height:16px;font-size:12px;color:#000;letter-spacing:0.07px;">neuer Nachricht: 'Segment Ende' '*DEFAULT'</div>
<div class="a" style="left:992px;top:386.5px;height:16px;line-height:16px;font-size:12px;color:#000;letter-spacing:-0.09px;">Neues UNH(EDIFACT;VDA;D97B;IFTMIN [VDA007]</div>
<div style="left:1307px;top:233px;width:199px;height:20px;background:#6fa8dc;border:1px solid #1c1c1c;border-radius:10px"></div>
<div class="a" style="left:1317px;top:235.5px;height:16px;line-height:16px;font-size:12px;color:#000;letter-spacing:0.16px;">3227 (1)</div>
<div style="left:1307px;top:293px;width:199px;height:20px;background:#6fa8dc;border:1px solid #1c1c1c;border-radius:10px"></div>
<div class="a" style="left:1317px;top:295.5px;height:16px;line-height:16px;font-size:12px;color:#000;letter-spacing:0.16px;">5479 (1)</div>
<div class="a" style="left:1307px;top:254px;height:16px;line-height:16px;font-size:11px;color:#000;letter-spacing:-0.25px;">Seg: SG1-LOC</div>
<div class="a" style="left:1307px;top:267px;height:16px;line-height:16px;font-size:11px;color:#000;letter-spacing:-0.15px;">Place/location qualifier [C]</div>
<div class="a" style="left:1307px;top:314px;height:16px;line-height:16px;font-size:11px;color:#000;letter-spacing:-0.25px;">Seg: SG1-LOC</div>
<div class="a" style="left:1307px;top:327px;height:16px;line-height:16px;font-size:11px;color:#000;letter-spacing:-0.19px;">Relation, coded [C]</div>
<div style="left:1306px;top:292px;width:204px;height:52px;border:1px solid #111"></div>
<div style="left:1305px;top:291px;width:4px;height:4px;background:#000;outline:1px solid rgba(255,255,255,0.75)"></div>
<div style="left:1305px;top:316px;width:4px;height:4px;background:#000;outline:1px solid rgba(255,255,255,0.75)"></div>
<div style="left:1305px;top:341px;width:4px;height:4px;background:#000;outline:1px solid rgba(255,255,255,0.75)"></div>
<div style="left:1406px;top:291px;width:4px;height:4px;background:#000;outline:1px solid rgba(255,255,255,0.75)"></div>
<div style="left:1406px;top:341px;width:4px;height:4px;background:#000;outline:1px solid rgba(255,255,255,0.75)"></div>
<div style="left:1507px;top:291px;width:4px;height:4px;background:#000;outline:1px solid rgba(255,255,255,0.75)"></div>
<div style="left:1507px;top:316px;width:4px;height:4px;background:#000;outline:1px solid rgba(255,255,255,0.75)"></div>
<div style="left:1507px;top:341px;width:4px;height:4px;background:#000;outline:1px solid rgba(255,255,255,0.75)"></div>
<div class="a" style="left:497px;top:750px;height:16px;line-height:16px;font-size:15px;color:#c6c6c6;font-weight:bold;letter-spacing:0.02px;">Quelle</div>
<div class="a" style="left:757px;top:750px;height:16px;line-height:16px;font-size:15px;color:#c6c6c6;font-weight:bold;letter-spacing:0.02px;">Bedingungen</div>
<div class="a" style="left:1102px;top:750px;height:16px;line-height:16px;font-size:15px;color:#c6c6c6;font-weight:bold;letter-spacing:-0.39px;">Aufgaben</div>
<div class="a" style="left:1393.5px;top:750px;height:16px;line-height:16px;font-size:15px;color:#c6c6c6;font-weight:bold;letter-spacing:-0.21px;">Ziel</div>
<div style="left:29px;top:811px;width:367px;height:190px;background:#fff;border:1px solid #828790"></div>
<div style="left:51px;top:813px;width:64px;height:22px;background:#dcebfc;border:1px solid #7eb0e6"></div>
<svg style="position:absolute;left:53px;top:816px" width="16" height="16" viewBox="0 0 16 16"><rect x="0.5" y="0.5" width="15" height="15" rx="2.2" fill="#de700a" stroke="#8f4a0c"/><path d="M3.4 12.8 L8.2 8" stroke="#fff" stroke-width="1.9" stroke-linecap="round"/><path d="M13 6.4 A3.1 3.1 0 1 1 9 3 L9.4 5.6 L11 6.9 Z" fill="#fff"/></svg>
<div class="t" style="left:74px;top:813px;height:22px;line-height:22px;font-size:14px;color:#000;"><span style="letter-spacing:-0.07px">Daten</span></div>
<div style="left:1549px;top:811px;width:366px;height:190px;background:#fff;border:1px solid #828790"></div>
<div style="left:1571px;top:813px;width:64px;height:22px;background:#f0f0f0;border:1px solid #d9d9d9"></div>
<svg style="position:absolute;left:1573px;top:816px" width="16" height="16" viewBox="0 0 16 16"><rect x="0.5" y="0.5" width="15" height="15" rx="2.2" fill="#2f6db5" stroke="#2a5f9e"/><path d="M3.4 12.8 L8.2 8" stroke="#fff" stroke-width="1.9" stroke-linecap="round"/><path d="M13 6.4 A3.1 3.1 0 1 1 9 3 L9.4 5.6 L11 6.9 Z" fill="#fff"/></svg>
<div class="t" style="left:1594px;top:813px;height:22px;line-height:22px;font-size:14px;color:#000;"><span style="letter-spacing:-0.07px">Daten</span></div>
<svg style="position:absolute;left:1573px;top:838px" width="16" height="16" viewBox="0 0 16 16"><rect x="2.5" y="1.5" width="13" height="13" fill="#eaf2fb" stroke="#2f5f9e"/><rect x="3" y="2" width="12" height="3" fill="#2f6db5"/><path d="M4.5 7.5 H13.5 M4.5 9.5 H13.5 M4.5 11.5 H13.5" stroke="#2f5f9e" stroke-width="1"/><path d="M3 0.3 L5.8 3.1 L3 5.9 L0.2 3.1 Z" fill="#ffd21f" stroke="#b88a00" stroke-width="0.8"/></svg>
<div class="t" style="left:1594px;top:835px;height:22px;line-height:22px;font-size:14px;color:#000;"><span style="letter-spacing:-0.27px">IFTMIN</span><span style="letter-spacing:0.11px"> </span>[VDA007]</div>
<div style="left:404px;top:783px;width:168px;height:23px;background:#fff;"></div>
<svg style="position:absolute;left:413px;top:785px" width="14" height="14" viewBox="0 0 14 14"><rect x="0.7" y="0.7" width="4.6" height="4.6" fill="#fff" stroke="#1c66b0" stroke-width="1.2"/><rect x="0.7" y="8.7" width="4.6" height="4.6" fill="#fff" stroke="#1c66b0" stroke-width="1.2"/><path d="M8 3 H13 M11 7 H13 M8 11 H13" stroke="#1c66b0" stroke-width="1.1"/><rect x="7.6" y="6" width="2" height="2" fill="none" stroke="#1c66b0" stroke-width="0.9"/></svg>
<div class="t" style="left:431px;top:782px;height:22px;line-height:22px;font-size:14px;color:#000;"><span style="letter-spacing:0.19px">Mapping</span><span style="letter-spacing:0.11px"> </span><span style="letter-spacing:-0.12px">Übersicht</span></div>
<svg style="position:absolute;left:555px;top:787px" width="11" height="11" viewBox="0 0 11 11"><path d="M0.5 2 L2 0.5 L5.5 4 L9 0.5 L10.5 2 L7 5.5 L10.5 9 L9 10.5 L5.5 7 L2 10.5 L0.5 9 L4 5.5 Z" fill="none" stroke="#4d4d4d" stroke-width="1.05"/></svg>
<svg style="position:absolute;left:579px;top:785.5px" width="12" height="14" viewBox="0 0 12 14"><rect x="0.5" y="0.5" width="11" height="13" rx="1" fill="#f4f4f4" stroke="#9a9a9a"/><path d="M3 3.5 H9 M3 5.5 H9 M3 7.5 H9 M3 9.5 H9 M3 11.5 H9" stroke="#a8a8a8" stroke-width="0.9"/></svg>
<div class="t" style="left:597px;top:782px;height:22px;line-height:22px;font-size:14px;color:#8a8a8a;">Detailinformationen</div>
<svg style="position:absolute;left:728px;top:786px" width="14" height="13" viewBox="0 0 14 13"><rect x="0.5" y="0.5" width="13" height="12" rx="1" fill="#f4f4f4" stroke="#9a9a9a"/><path d="M7 1 V12" stroke="#9a9a9a"/><path d="M2.5 3 H5 M2.5 5.5 H5 M2.5 8 H5" stroke="#9a9a9a"/><path d="M8.5 3.5 L11.5 6.5 M11.5 3.5 L8.5 6.5 M8.5 9 L9.7 10.5 L11.8 8" fill="none" stroke="#9a9a9a" stroke-width="0.9"/></svg>
<div class="t" style="left:746px;top:782px;height:22px;line-height:22px;font-size:14px;color:#8a8a8a;"><span style="letter-spacing:-0.12px">Variablen</span></div>
<svg style="position:absolute;left:1398px;top:783.4px" width="17" height="16" viewBox="0 0 17 16"><path d="M2.5 0.5 V12 M0.5 10 L2.5 12.5 L4.5 10" fill="none" stroke="#8c8c8c" stroke-width="1.2"/><text x="6" y="7" font-family="Liberation Sans,sans-serif" font-size="10" font-weight="bold" fill="#9a9a9a">a</text><text x="9.5" y="14.6" font-family="Liberation Sans,sans-serif" font-size="11" font-weight="bold" fill="#9a9a9a">z</text></svg>
<svg style="position:absolute;left:1421px;top:782.4px" width="16" height="16" viewBox="0 0 16 16"><path d="M1.5 14 L8 7.5" stroke="#e8a048" stroke-width="2.6" stroke-linecap="round"/><path d="M1.5 14 L8 7.5" stroke="#fff0c8" stroke-width="0.9" stroke-linecap="round"/><circle cx="10.8" cy="4.8" r="3.7" fill="#fff" stroke="#3a7cc0" stroke-width="1.3"/></svg>
<svg style="position:absolute;left:1443.6px;top:782.2px" width="16" height="16" viewBox="0 0 16 16"><rect x="0.8" y="9.6" width="10" height="5" fill="#fff" stroke="#1d4f9c" stroke-width="1.2"/><path d="M2.5 12 H8" stroke="#e8780a" stroke-width="1.4"/><path d="M6.5 12.5 H11.5 V6.5 H14.5 L9.5 0.7 L4.5 6.5 H7.5 V9.5 H6.5 Z" fill="#ffc81e" stroke="#d8820a" stroke-width="0.9"/></svg>
<svg style="position:absolute;left:1466px;top:783px" width="17" height="16" viewBox="0 0 17 16"><path d="M1 0.6 H10.5 V5.4 H1 Z" fill="#fff" stroke="#1d4f9c" stroke-width="1.2"/><path d="M3 3 H9" stroke="#e8780a" stroke-width="1.4"/><path d="M5 3 H10 V9.5 H7 L12 15.3 L17 9.5 H14 V0.8 H5 Z" fill="#ffc81e" stroke="#d8820a" stroke-width="0.9" transform="translate(-1.5 0)"/></svg>
<svg style="position:absolute;left:1493px;top:785px" width="10" height="4" viewBox="0 0 10 4"><rect x="0.5" y="0.5" width="9" height="3" fill="#fff" stroke="#666"/></svg>
<svg style="position:absolute;left:1516px;top:785px" width="10" height="10" viewBox="0 0 10 10"><rect x="0.5" y="0.5" width="9" height="9" fill="#fff" stroke="#555"/><path d="M0.5 2.5 H9.5" stroke="#555"/></svg>
<svg style="position:absolute;left:412px;top:813.6px" width="12" height="8" viewBox="0 0 12 8"><path d="M2.2 1.8 L6 5.9 L9.8 1.8" fill="none" stroke="#606060" stroke-width="1.7"/></svg>
<svg style="position:absolute;left:429px;top:810px" width="17" height="14" viewBox="0 0 17 14"><path d="M0.7 1 V13.5 M15.7 1 V13.5 M0.7 7 H3.6 M12.8 7 H15.7" stroke="#2a2420" stroke-width="1.3" fill="none"/><path d="M4.6 0.6 H9.8 L12.9 3.7 V12.4 Q12.9 13.4 11.9 13.4 H4.6 Q3.6 13.4 3.6 12.4 V1.6 Q3.6 0.6 4.6 0.6 Z" fill="#fff" stroke="#2a2420" stroke-width="1.2"/><path d="M9.6 0.8 V3.9 H12.7" fill="none" stroke="#2a2420" stroke-width="1"/><path d="M5.3 4 H8.2 M5.3 6.3 H11.2 M5.3 8.6 H11.2 M5.3 10.9 H11.2" stroke="#2a2420" stroke-width="1.2"/></svg>
<div class="t" style="left:450px;top:806px;height:22px;line-height:22px;font-size:14px;color:#000;"><span style="letter-spacing:-0.24px">Kopfbereich</span></div>
<svg style="position:absolute;left:433px;top:835px" width="8" height="12" viewBox="0 0 8 12"><path d="M1.5 1.9 L5.8 6 L1.5 10.1" fill="none" stroke="#a6a6a6" stroke-width="1.8"/></svg>
<svg style="position:absolute;left:448px;top:832px" width="17" height="14" viewBox="0 0 17 14"><path d="M0.7 1 V13.5 M15.7 1 V13.5 M0.7 7 H3.6 M12.8 7 H15.7" stroke="#2a2420" stroke-width="1.3" fill="none"/><path d="M4.6 0.6 H9.8 L12.9 3.7 V12.4 Q12.9 13.4 11.9 13.4 H4.6 Q3.6 13.4 3.6 12.4 V1.6 Q3.6 0.6 4.6 0.6 Z" fill="#fff" stroke="#2a2420" stroke-width="1.2"/><path d="M9.6 0.8 V3.9 H12.7" fill="none" stroke="#2a2420" stroke-width="1"/><path d="M5.3 4 H8.2 M5.3 6.3 H11.2 M5.3 8.6 H11.2 M5.3 10.9 H11.2" stroke="#2a2420" stroke-width="1.2"/></svg>
<div class="t" style="left:469px;top:828px;height:22px;line-height:22px;font-size:14px;color:#000;"><span style="letter-spacing:-0.09px">Verwendete</span><span style="letter-spacing:0.11px"> </span><span style="letter-spacing:0.18px">Module</span></div>
<svg style="position:absolute;left:412px;top:857.6px" width="12" height="8" viewBox="0 0 12 8"><path d="M2.2 1.8 L6 5.9 L9.8 1.8" fill="none" stroke="#606060" stroke-width="1.7"/></svg>
<svg style="position:absolute;left:429px;top:853px" width="17" height="16" viewBox="0 0 17 16"><rect x="0.6" y="1.6" width="10" height="5" fill="#fff" stroke="#4460e0" stroke-width="1.2"/><rect x="2.3" y="3.2" width="6" height="1.6" fill="#d8a050"/><rect x="5.6" y="9.6" width="10" height="5" fill="#fff" stroke="#d8a050" stroke-width="1.2"/><rect x="9.5" y="11.2" width="4.6" height="1.6" fill="#5a8ad0"/><path d="M3.2 5.2 L6.3 4.6 L8.2 6.4 L9.6 5.4 L11.6 9.6 L8 12 L8 10.2 L5.6 10 L5.2 7.4 Z" fill="#ffd21f" stroke="#e0a800" stroke-width="0.7"/></svg>
<div class="t" style="left:450px;top:850px;height:22px;line-height:22px;font-size:14px;color:#000;"><span style="letter-spacing:-0.04px">Mappingbereich</span></div>
<svg style="position:absolute;left:433px;top:879px" width="8" height="12" viewBox="0 0 8 12"><path d="M1.5 1.9 L5.8 6 L1.5 10.1" fill="none" stroke="#a6a6a6" stroke-width="1.8"/></svg>
<svg style="position:absolute;left:448px;top:875px" width="16" height="16" viewBox="0 0 16 16"><rect x="4.6" y="7.6" width="10.4" height="5.8" fill="#fff" stroke="#1d4f8c" stroke-width="1.2"/><rect x="2.6" y="5.6" width="10.4" height="5.8" fill="#fff" stroke="#1d4f8c" stroke-width="1.2"/><rect x="0.6" y="3.6" width="10.4" height="5.8" fill="#fff" stroke="#1d4f8c" stroke-width="1.2"/><rect x="2.6" y="5.4" width="6.4" height="2" fill="#e87a10"/></svg>
<div class="t" style="left:469px;top:872px;height:22px;line-height:22px;font-size:14px;color:#000;"><span style="letter-spacing:0.06px">*premapping</span><span style="letter-spacing:0.11px"> </span><span style="letter-spacing:-0.13px">(001)</span><span style="color:#7b7668"> <span style="letter-spacing:-0.10px">[Premapping]</span></span></div>
<svg style="position:absolute;left:433px;top:901px" width="8" height="12" viewBox="0 0 8 12"><path d="M1.5 1.9 L5.8 6 L1.5 10.1" fill="none" stroke="#a6a6a6" stroke-width="1.8"/></svg>
<svg style="position:absolute;left:448px;top:897px" width="16" height="16" viewBox="0 0 16 16"><rect x="4.6" y="7.6" width="10.4" height="5.8" fill="#fff" stroke="#1d4f8c" stroke-width="1.2"/><rect x="2.6" y="5.6" width="10.4" height="5.8" fill="#fff" stroke="#1d4f8c" stroke-width="1.2"/><rect x="0.6" y="3.6" width="10.4" height="5.8" fill="#fff" stroke="#1d4f8c" stroke-width="1.2"/><rect x="2.6" y="5.4" width="6.4" height="2" fill="#e87a10"/></svg>
<div class="t" style="left:469px;top:894px;height:22px;line-height:22px;font-size:14px;color:#000;"><span style="letter-spacing:0.12px">*postmapping</span><span style="color:#7b7668"> [Postmapping]</span></div>
<div style="left:446px;top:916px;width:290px;height:22px;background:#f0f0f0;border:1px solid #d9d9d9"></div>
<svg style="position:absolute;left:433px;top:923px" width="8" height="12" viewBox="0 0 8 12"><path d="M1.5 1.9 L5.8 6 L1.5 10.1" fill="none" stroke="#a6a6a6" stroke-width="1.8"/></svg>
<svg style="position:absolute;left:448px;top:919px" width="16" height="16" viewBox="0 0 16 16"><rect x="4.6" y="7.6" width="10.4" height="5.8" fill="#fff" stroke="#1d4f8c" stroke-width="1.2"/><rect x="2.6" y="5.6" width="10.4" height="5.8" fill="#fff" stroke="#1d4f8c" stroke-width="1.2"/><rect x="0.6" y="3.6" width="10.4" height="5.8" fill="#fff" stroke="#1d4f8c" stroke-width="1.2"/><rect x="2.6" y="5.4" width="6.4" height="2" fill="#e87a10"/></svg>
<div class="t" style="left:469px;top:916px;height:22px;line-height:22px;font-size:14px;color:#000;"><span style="letter-spacing:0.22px">512</span><span style="letter-spacing:0.11px"> </span><span style="letter-spacing:-0.13px">(001)</span><span style="letter-spacing:0.11px"> </span>[unique<span style="letter-spacing:0.11px"> </span><span style="letter-spacing:-0.15px">delivery</span><span style="letter-spacing:0.11px"> </span><span style="letter-spacing:0.11px">instruction</span><span style="letter-spacing:0.11px"> </span>data]</div>
<div style="left:404px;top:88px;width:2px;height:684px;background:#e6eaec;"></div>
<div style="left:404px;top:783px;width:2px;height:223px;background:#e6eaec;"></div>
<div style="left:1540px;top:88px;width:3px;height:684px;background:#e9ecee;"></div>
<div style="left:1540px;top:783px;width:3px;height:223px;background:#e9ecee;"></div>
<div style="left:20px;top:83px;width:384px;height:692px;border:4px solid #bf4630"></div>
<div style="left:400px;top:84px;width:1140px;height:692px;border:4px solid #bf4630"></div>
<div style="left:1536px;top:84px;width:384px;height:692px;border:4px solid #bf4630"></div>
<div style="left:20px;top:779px;width:384px;height:231px;border:4px solid #bf4630"></div>
<div style="left:400px;top:779px;width:1140px;height:231px;border:4px solid #bf4630"></div>
<div style="left:1536px;top:779px;width:384px;height:231px;border:4px solid #bf4630"></div>
<div class="a" style="left:203px;top:414px;height:32px;line-height:32px;font-size:28px;color:#ff0000">1</div>
<div class="a" style="left:957px;top:414.5px;height:32px;line-height:32px;font-size:28px;color:#ff0000">3</div>
<div class="a" style="left:1719px;top:415px;height:32px;line-height:32px;font-size:28px;color:#ff0000">1</div>
<div class="a" style="left:200.7px;top:879px;height:32px;line-height:32px;font-size:28px;color:#ff0000">2</div>
<div class="a" style="left:960px;top:877px;height:32px;line-height:32px;font-size:28px;color:#ff0000">4</div>
<div class="a" style="left:1718.5px;top:881px;height:32px;line-height:32px;font-size:28px;color:#ff0000">2</div>
<div style="left:1563px;top:1013px;width:1.5px;height:1.5px;background:#9a9484;"></div>
<div style="left:1563px;top:1017.5px;width:1.5px;height:1.5px;background:#9a9484;"></div>
<div style="left:1563px;top:1022px;width:1.5px;height:1.5px;background:#9a9484;"></div>
<div style="left:1563px;top:1026.5px;width:1.5px;height:1.5px;background:#9a9484;"></div>
</body></html>
